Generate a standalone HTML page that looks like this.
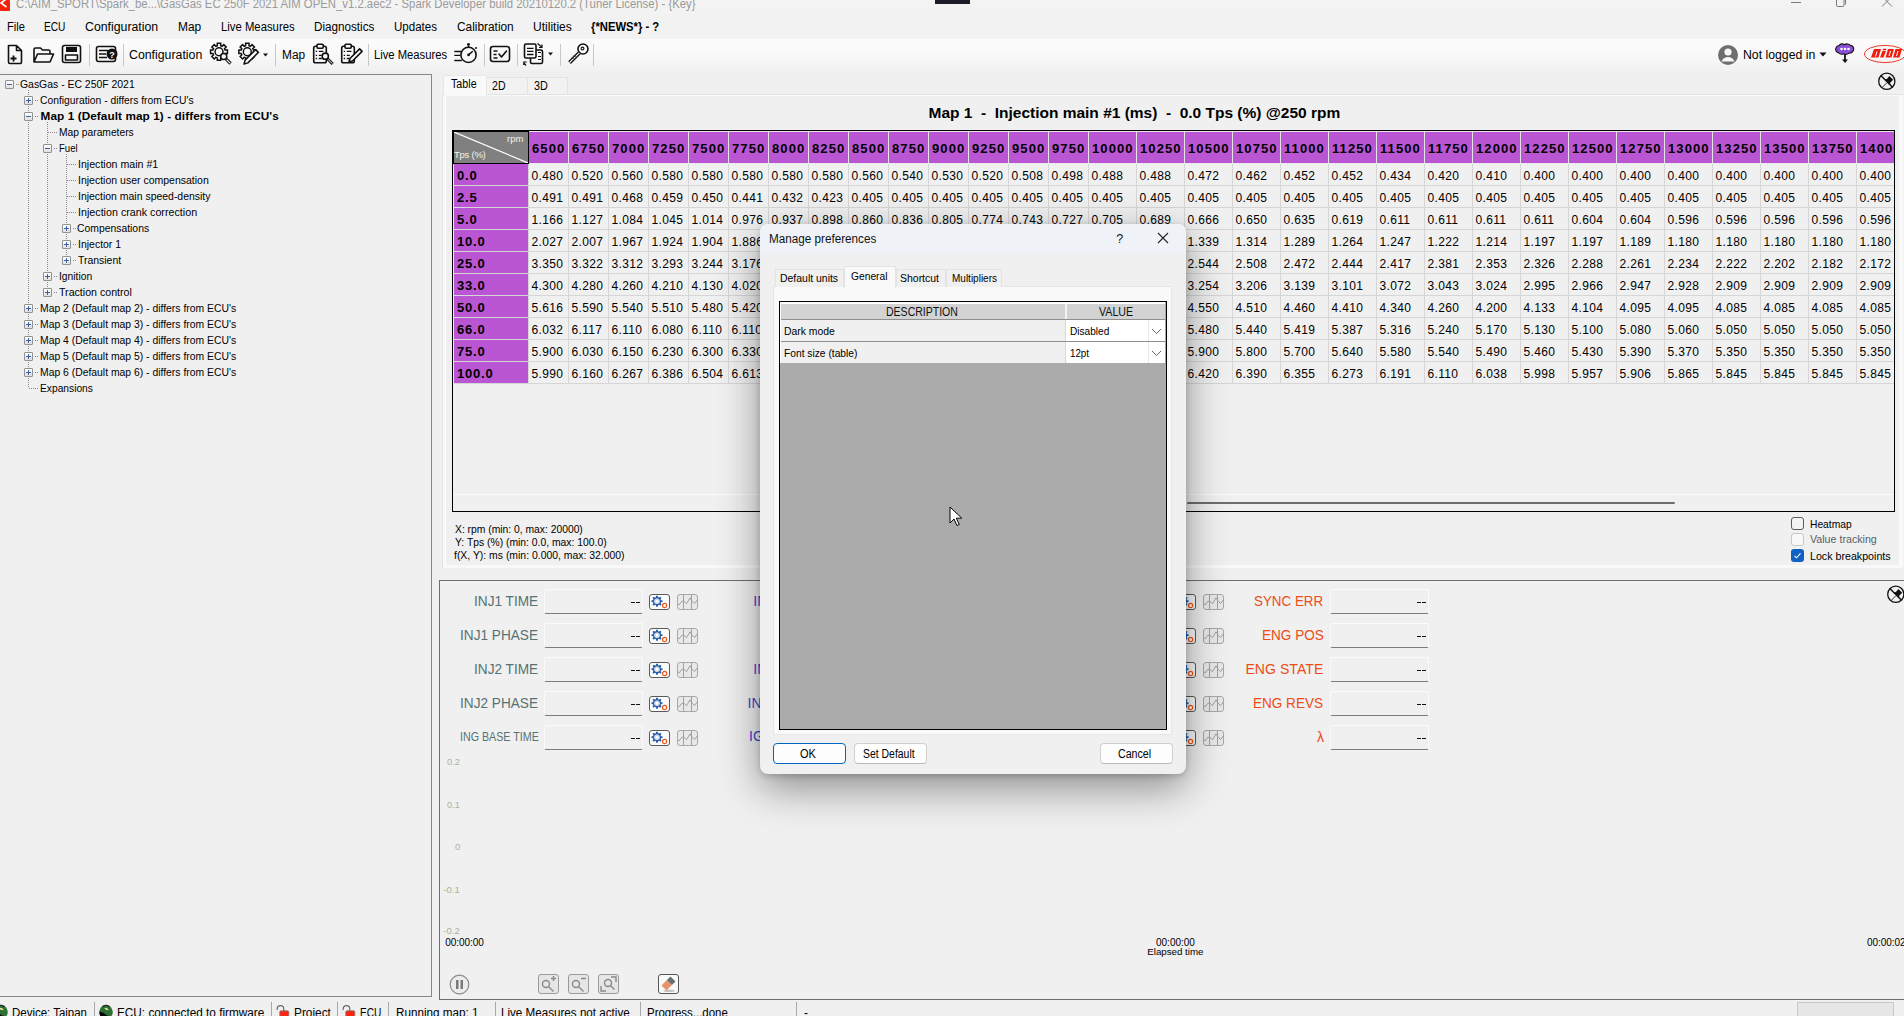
<!DOCTYPE html>
<html><head><meta charset="utf-8">
<style>
*{box-sizing:border-box;margin:0;padding:0}
html,body{width:1904px;height:1016px;overflow:hidden}
body{position:relative;background:#f0f0f0;font-family:"Liberation Sans",sans-serif;color:#000;font-size:12px}
.a{position:absolute;white-space:pre}
#title{left:0;top:0;width:1904px;height:14px;background:#f3f3f3;overflow:hidden}
#menubar{left:0;top:14px;width:1904px;height:25px;background:#f2f2f2}
#menubar span{position:absolute;top:6px;font-size:12px;line-height:14px}
#toolbar{left:0;top:39px;width:1904px;height:35px;background:linear-gradient(#fbfbfb,#fafafa 25%,#f7f7f7 55%,#efefef)}
.sep{position:absolute;top:5px;width:1px;height:22px;background:#c8c8c8}
.tbt{position:absolute;top:10px;font-size:12px;line-height:14px}
#tree{left:0;top:74px;width:432px;height:923px;border-top:1px solid #828790;border-right:1px solid #828790;border-bottom:1px solid #828790;background:#f0f0f0}
.tn{position:absolute;font-size:11px;line-height:13px;white-space:nowrap}
.exp{position:absolute;width:9px;height:9px;border:1px solid #919191;background:linear-gradient(#fff,#e0e0e0);border-radius:1px}
.exp:before{content:"";position:absolute;left:1px;top:3px;width:5px;height:1px;background:#3b5fa8}
.exp.p:after{content:"";position:absolute;left:3px;top:1px;width:1px;height:5px;background:#3b5fa8}
.vd{position:absolute;width:1px;background-image:linear-gradient(#8a8a8a 50%,transparent 50%);background-size:1px 2px}
.hd{position:absolute;height:1px;background-image:linear-gradient(90deg,#8a8a8a 50%,transparent 50%);background-size:2px 1px}
#tbl{left:452px;top:130px;width:1443px;height:382px;border:1px solid #000;border-width:1px 1px 1px 1px;overflow:hidden;background:#f0f0f0}
.hc,.dc,.rh{position:absolute;white-space:nowrap;overflow:hidden}
.hc{top:1px;height:31px;background:#ba55d3;font-weight:bold;font-size:13px;letter-spacing:1.1px;line-height:15px;padding-top:9px;padding-left:3px}
.dc{height:21px;background:#f0f0f0;font-size:12px;line-height:14px;padding-top:5px;padding-left:2.5px;letter-spacing:0.35px}
.rh{left:1px;width:74px;height:21px;background:#ba55d3;font-weight:bold;font-size:13px;letter-spacing:0.8px;line-height:15px;padding-top:4px;padding-left:3px}
</style></head><body>
<div class="a" id="title">
 <svg class="a" style="left:0;top:0" width="11" height="12"><rect x="0" y="0" width="10" height="11" rx="0.8" fill="#f42208"/><path d="M5.5 -0.5L1 3L6.5 7" fill="none" stroke="#fff" stroke-width="1.7"/></svg>
 <div class="a" style="left:935px;top:0;width:35px;height:4px;background:#1c1c28"></div>
 <svg class="a" style="left:1788px;top:-6px" width="110" height="20"><path d="M3 8.5h10" stroke="#7a7a7a" stroke-width="1"/><rect x="48.5" y="0.5" width="7.5" height="12" rx="1.2" fill="none" stroke="#7a7a7a" stroke-width="1"/><path d="M57.5 4v6.5" stroke="#7a7a7a" stroke-width="1"/><path d="M94 2.5l10 10 M104 2.5l-10 10" stroke="#7a7a7a" stroke-width="1"/></svg>
</div>
<div class="a" id="menubar"></div>
<div class="a" id="toolbar"></div>
<svg class="a" style="left:6px;top:43px;" width="20" height="22" viewBox="0 0 20 22"><path d="M2.5 2.5h8l5 5v11.5a1.5 1.5 0 0 1-1.5 1.5h-10a1.5 1.5 0 0 1-1.5-1.5z M10.5 2.5v5h5" fill="none" stroke="#111" stroke-width="1.6" stroke-linejoin="round" stroke-linecap="round"/><path d="M4.5 15.5h6 M7.5 12.5v6" stroke="#111" stroke-width="1.8"/></svg>
<svg class="a" style="left:32px;top:45px;" width="24" height="20" viewBox="0 0 24 20"><path d="M2 17V4.5a1.5 1.5 0 0 1 1.5-1.5h5l2 2h6a1.5 1.5 0 0 1 1.5 1.5V9 M2 17l3.5-8h16l-3.5 8z" fill="none" stroke="#111" stroke-width="1.6" stroke-linejoin="round" stroke-linecap="round"/></svg>
<svg class="a" style="left:61px;top:44px;" width="22" height="21" viewBox="0 0 22 21"><rect x="1.5" y="1.5" width="18" height="17" rx="2" fill="none" stroke="#111" stroke-width="1.6" stroke-linejoin="round" stroke-linecap="round"/><rect x="5" y="3" width="11" height="5" fill="#111"/><rect x="4.5" y="11" width="12" height="5" fill="none" stroke="#111" stroke-width="1.6" stroke-linejoin="round" stroke-linecap="round"/></svg>
<div class="sep" style="left:89px;top:44px;height:22px;position:absolute"></div>
<svg class="a" style="left:95px;top:45px;" width="24" height="19" viewBox="0 0 24 19"><rect x="1.5" y="1.5" width="19" height="15" rx="2" fill="none" stroke="#111" stroke-width="1.6" stroke-linejoin="round" stroke-linecap="round"/><path d="M4 5.5h9 M4 9h7 M4 12.5h8" stroke="#111" stroke-width="1.4"/><circle cx="17" cy="9" r="5.5" fill="#111"/><text x="17" y="12.5" font-size="9" font-weight="bold" fill="#fff" text-anchor="middle" font-family="Liberation Sans">?</text></svg>
<div class="sep" style="left:123px;top:44px;height:22px;position:absolute"></div>
<div class="a" style="left:129.30px;top:48.00px;font-size:12.5px;line-height:14px;transform:scaleX(0.9859);transform-origin:0.00px 0;">Configuration</div>
<svg class="a" style="left:208px;top:42px;" width="26" height="24" viewBox="0 0 26 24"><path d="M9.30 3.73L9.30 1.37L12.70 1.37L12.70 3.73A6.3 6.3 0 0 1 14.09 4.31L14.09 4.31L15.76 2.64L18.16 5.04L16.49 6.71A6.3 6.3 0 0 1 17.07 8.10L17.07 8.10L19.43 8.10L19.43 11.50L17.07 11.50A6.3 6.3 0 0 1 16.49 12.89L16.49 12.89L18.16 14.56L15.76 16.96L14.09 15.29A6.3 6.3 0 0 1 12.70 15.87L12.70 15.87L12.70 18.23L9.30 18.23L9.30 15.87A6.3 6.3 0 0 1 7.91 15.29L7.91 15.29L6.24 16.96L3.84 14.56L5.51 12.89A6.3 6.3 0 0 1 4.93 11.50L4.93 11.50L2.57 11.50L2.57 8.10L4.93 8.10A6.3 6.3 0 0 1 5.51 6.71L5.51 6.71L3.84 5.04L6.24 2.64L7.91 4.31A6.3 6.3 0 0 1 9.30 3.73Z" fill="#fafafa" stroke="#111" stroke-width="1.5" stroke-linejoin="miter"/><circle cx="11" cy="9.8" r="3.95" fill="none" stroke="#111" stroke-width="1.5"/><path d="M18.2 17.2l4.3 4.3" stroke="#111" stroke-width="3.2" stroke-linecap="butt"/><path d="M18.6 17.6l3.5 3.5" stroke="#fafafa" stroke-width="1.1"/><circle cx="15.75" cy="14.5" r="3" fill="#fafafa" stroke="#111" stroke-width="1.5"/></svg>
<svg class="a" style="left:237px;top:42px;" width="34" height="24" viewBox="0 0 34 24"><path d="M8.60 3.73L8.60 1.37L12.00 1.37L12.00 3.73A6.3 6.3 0 0 1 13.39 4.31L13.39 4.31L15.06 2.64L17.46 5.04L15.79 6.71A6.3 6.3 0 0 1 16.37 8.10L16.37 8.10L18.73 8.10L18.73 11.50L16.37 11.50A6.3 6.3 0 0 1 15.79 12.89L15.79 12.89L17.46 14.56L15.06 16.96L13.39 15.29A6.3 6.3 0 0 1 12.00 15.87L12.00 15.87L12.00 18.23L8.60 18.23L8.60 15.87A6.3 6.3 0 0 1 7.21 15.29L7.21 15.29L5.54 16.96L3.14 14.56L4.81 12.89A6.3 6.3 0 0 1 4.23 11.50L4.23 11.50L1.87 11.50L1.87 8.10L4.23 8.10A6.3 6.3 0 0 1 4.81 6.71L4.81 6.71L3.14 5.04L5.54 2.64L7.21 4.31A6.3 6.3 0 0 1 8.60 3.73Z" fill="#fafafa" stroke="#111" stroke-width="1.5" stroke-linejoin="miter"/><circle cx="10.3" cy="9.8" r="3.95" fill="none" stroke="#111" stroke-width="1.5"/><path d="M7 22L8.1 18.1L18.6 7.6L21.4 10.4L10.9 20.9Z" fill="#fafafa" stroke="#111" stroke-width="1.5" stroke-linejoin="round"/><path d="M26 11.5h5l-2.5 3z" fill="#111"/></svg>
<div class="sep" style="left:275px;top:44px;height:22px;position:absolute"></div>
<div class="a" style="left:281.50px;top:48.00px;font-size:12.5px;line-height:14px;transform:scaleX(0.9501);transform-origin:0.00px 0;">Map</div>
<svg class="a" style="left:312px;top:43px;" width="24" height="23" viewBox="0 0 24 23"><rect x="1.7" y="3.3" width="12.6" height="16.4" rx="1.8" fill="none" stroke="#111" stroke-width="1.6" stroke-linejoin="round" stroke-linecap="round"/><rect x="5" y="1.3" width="6.2" height="4" rx="1" fill="#fafafa" fill="none" stroke="#111" stroke-width="1.6" stroke-linejoin="round" stroke-linecap="round"/><path d="M3.7 8.4h1.4 M6.8 8.4h4.6 M3.7 12.4h1.4 M6.8 12.4h3 M3.7 15.5h1.4 M6.8 15.5h3" stroke="#111" stroke-width="1.3"/><path d="M15.5 15.8l5.2 5.2" stroke="#111" stroke-width="3"/><path d="M15.9 16.2l4.4 4.4" stroke="#fafafa" stroke-width="1"/><circle cx="13.3" cy="13.2" r="3.1" fill="#fafafa" fill="none" stroke="#111" stroke-width="1.6" stroke-linejoin="round" stroke-linecap="round"/></svg>
<svg class="a" style="left:340px;top:43px;" width="24" height="23" viewBox="0 0 24 23"><rect x="1.7" y="3.3" width="12.6" height="16.4" rx="1.8" fill="none" stroke="#111" stroke-width="1.6" stroke-linejoin="round" stroke-linecap="round"/><rect x="5" y="1.3" width="6.2" height="4" rx="1" fill="#fafafa" fill="none" stroke="#111" stroke-width="1.6" stroke-linejoin="round" stroke-linecap="round"/><path d="M3.7 8.4h1.4 M6.8 8.4h4.6 M3.7 12.4h1.4 M6.8 12.4h3 M3.7 15.5h1.4 M6.8 15.5h3" stroke="#111" stroke-width="1.3"/><path d="M9 18.5L10 15.5L19.6 5.9L22.1 8.4L12.5 18z" fill="#fafafa" fill="none" stroke="#111" stroke-width="1.6" stroke-linejoin="round" stroke-linecap="round"/></svg>
<div class="sep" style="left:368px;top:44px;height:22px;position:absolute"></div>
<div class="a" style="left:374.30px;top:48.00px;font-size:12.5px;line-height:14px;transform:scaleX(0.8993);transform-origin:0.00px 0;">Live Measures</div>
<svg class="a" style="left:453px;top:42px;" width="26" height="25" viewBox="0 0 26 25"><circle cx="15.5" cy="12.9" r="7.6" fill="none" stroke="#111" stroke-width="1.6" stroke-linejoin="round" stroke-linecap="round"/><path d="M15.5 3v2.2" stroke="#111" stroke-width="1.6"/><rect x="14" y="1.2" width="3" height="2" rx="0.8" fill="#111"/><path d="M1.3 9.5h7 M1.3 13.3h6 M1.3 18.5h7.5" stroke="#111" stroke-width="1.3"/><path d="M15.5 12.9L19.8 9.2" stroke="#111" stroke-width="1.5"/><circle cx="15.5" cy="12.9" r="1.3" fill="#111"/><circle cx="23" cy="6" r="1" fill="#111"/></svg>
<div class="sep" style="left:484px;top:44px;height:22px;position:absolute"></div>
<svg class="a" style="left:489px;top:45px;" width="23" height="19" viewBox="0 0 23 19"><rect x="1.5" y="1.5" width="19" height="15" rx="2.5" fill="none" stroke="#111" stroke-width="1.6" stroke-linejoin="round" stroke-linecap="round"/><path d="M4.5 6h4 M4.5 9.5h3 M4.5 13h4" stroke="#111" stroke-width="1.4"/><path d="M10 9l2.5 3 5-6" fill="none" stroke="#111" stroke-width="1.6" stroke-linejoin="round" stroke-linecap="round" stroke-width="1.8"/></svg>
<div class="sep" style="left:517px;top:44px;height:22px;position:absolute"></div>
<svg class="a" style="left:523px;top:42px;" width="32" height="26" viewBox="0 0 32 26"><rect x="7.5" y="8" width="12" height="13.5" rx="1.5" fill="#fafafa" fill="none" stroke="#111" stroke-width="1.6" stroke-linejoin="round" stroke-linecap="round"/><path d="M15 10.5h3 M15 14.5h3 M15 17.5h3" stroke="#111" stroke-width="1.2"/><rect x="1.5" y="2" width="11.5" height="14" rx="1.5" fill="#fafafa" fill="none" stroke="#111" stroke-width="1.6" stroke-linejoin="round" stroke-linecap="round"/><path d="M4 6.3h6.5 M4 9.3h6.5 M4 12.5h6.5" stroke="#111" stroke-width="1.3"/><path d="M14.5 1.5l4.5 3.8 M19 2.5v3h-3 M3 23.5l-2.5-3 M0.8 23v-3h3" fill="none" stroke="#111" stroke-width="1.2"/><path d="M25 10.5h5l-2.5 3z" fill="#111"/></svg>
<div class="sep" style="left:560px;top:44px;height:22px;position:absolute"></div>
<svg class="a" style="left:565px;top:42px;" width="26" height="24" viewBox="0 0 26 24"><circle cx="18" cy="7" r="5" fill="#fafafa" fill="none" stroke="#111" stroke-width="1.6" stroke-linejoin="round" stroke-linecap="round"/><circle cx="17.5" cy="6.5" r="1.4" fill="none" stroke="#111" stroke-width="1.1"/><path d="M14.3 10.8L4.5 20.6" stroke="#111" stroke-width="3.8"/><path d="M14.3 10.8L4.5 20.6" stroke="#fafafa" stroke-width="1.2"/><path d="M7 15.5l1.5 1.5 M9 13.5l1.5 1.5" stroke="#111" stroke-width="1"/></svg>
<div class="sep" style="left:593px;top:44px;height:22px;position:absolute"></div>
<svg class="a" style="left:1717px;top:44px;" width="22" height="22" viewBox="0 0 22 22"><circle cx="11" cy="11" r="10" fill="#6e6e6e"/><circle cx="11" cy="8" r="3.6" fill="#f8f8f8"/><path d="M4.5 17.5c1.5-3.5 4-4.5 6.5-4.5s5 1 6.5 4.5" fill="#f8f8f8"/></svg>
<div class="a" style="left:1743.20px;top:48.00px;font-size:12.5px;line-height:14px;transform:scaleX(0.9815);transform-origin:0.00px 0;">Not logged in</div>
<svg class="a" style="left:1819px;top:52px;" width="8" height="5" viewBox="0 0 8 5"><path d="M0.5 0.5h7l-3.5 4z" fill="#111"/></svg>
<svg class="a" style="left:1834px;top:42px;" width="22" height="23" viewBox="0 0 22 23"><path d="M5 3.5c1.5-2 4-2 5.5-.8 1.5-1.2 4.5-1 5.8.5 2.5.3 4 2.5 3.2 4.8-.8 2.3-2.5 3.2-4.5 3.2-1.5 1.3-4 1.5-5.5.5-1.5.8-4 .5-5-1-2.5-.5-3.5-3-2.5-5C2.5 4.5 3.5 3.5 5 3.5z" fill="#8a4fd8" stroke="#111" stroke-width="1.1"/><circle cx="7.5" cy="7" r="1.3" fill="#fff"/><circle cx="11" cy="7" r="1.3" fill="#fff"/><circle cx="14.5" cy="7" r="1.3" fill="#fff"/><path d="M11 13v6.5" stroke="#111" stroke-width="1.8"/><path d="M8 17.5l3 3.5 3-3.5z" fill="#111"/></svg>
<svg class="a" style="left:1862px;top:44px;" width="42" height="20" viewBox="0 0 42 20"><ellipse cx="23" cy="10" rx="20.5" ry="8.6" fill="none" stroke="#ee3a28" stroke-width="1"/><path d="M12 5h7l-2.5 8.5h-7.5z M20.5 7h3.5l-2.5 6.5h-3.5z M21 4.8h3.5l-.4 1.4h-3.5z M26 5h6l-2.5 8.5h-6z M33.5 5h6.5l-2.5 8.5h-6.5z" fill="#f01e10"/><path d="M15 7.5l-1.5 5 M28.5 7l-1.5 5 M36 7l-1.5 5" stroke="#fff" stroke-width="1"/></svg>
<div class="a" style="left:7.10px;top:20.00px;font-size:12.5px;line-height:14px;transform:scaleX(0.8889);transform-origin:0.00px 0;">File</div>
<div class="a" style="left:44.30px;top:20.00px;font-size:12.5px;line-height:14px;transform:scaleX(0.8110);transform-origin:0.00px 0;">ECU</div>
<div class="a" style="left:85.40px;top:20.00px;font-size:12.5px;line-height:14px;transform:scaleX(0.9845);transform-origin:0.00px 0;">Configuration</div>
<div class="a" style="left:178.20px;top:20.00px;font-size:12.5px;line-height:14px;transform:scaleX(0.9542);transform-origin:0.00px 0;">Map</div>
<div class="a" style="left:221.00px;top:20.00px;font-size:12.5px;line-height:14px;transform:scaleX(0.9054);transform-origin:0.00px 0;">Live Measures</div>
<div class="a" style="left:314.30px;top:20.00px;font-size:12.5px;line-height:14px;transform:scaleX(0.9333);transform-origin:0.00px 0;">Diagnostics</div>
<div class="a" style="left:394.00px;top:20.00px;font-size:12.5px;line-height:14px;transform:scaleX(0.9235);transform-origin:0.00px 0;">Updates</div>
<div class="a" style="left:456.50px;top:20.00px;font-size:12.5px;line-height:14px;transform:scaleX(0.9490);transform-origin:0.00px 0;">Calibration</div>
<div class="a" style="left:533.20px;top:20.00px;font-size:12.5px;line-height:14px;transform:scaleX(0.9631);transform-origin:0.00px 0;">Utilities</div>
<div class="a" style="left:591.00px;top:20.00px;font-size:12.0px;line-height:14px;font-weight:bold;transform:scaleX(0.9385);transform-origin:0.00px 0;">{*NEWS*} - ?</div>
<div class="a" style="left:16.30px;top:-3.00px;font-size:12.5px;line-height:14px;color:#9a9a9a;transform:scaleX(0.9072);transform-origin:0.00px 0;">C:\AIM_SPORT\Spark_be...\GasGas EC 250F 2021 AIM OPEN_v1.2.aec2 - Spark Developer build 20210120.2 (Tuner License) - {Key}</div>
<div class="a" id="tree"></div>
<div class="vd" style="left:28px;top:90px;height:298px"></div>
<div class="vd" style="left:47px;top:122px;height:170px"></div>
<div class="vd" style="left:66px;top:154px;height:106px"></div>
<div class="exp " style="left:5px;top:80px"></div>
<div class="hd" style="left:16px;top:84px;width:4px"></div>
<div class="a" style="left:20.10px;top:78.00px;font-size:11.0px;line-height:13px;transform:scaleX(0.9475);transform-origin:0.00px 0;">GasGas - EC 250F 2021</div>
<div class="exp p" style="left:24px;top:96px"></div>
<div class="hd" style="left:35px;top:100px;width:4px"></div>
<div class="a" style="left:39.60px;top:94.00px;font-size:11.0px;line-height:13px;transform:scaleX(0.9372);transform-origin:0.00px 0;">Configuration - differs from ECU&#x27;s</div>
<div class="exp " style="left:24px;top:112px"></div>
<div class="hd" style="left:35px;top:116px;width:4px"></div>
<div class="a" style="left:40.60px;top:109.00px;font-size:11.75px;line-height:14px;letter-spacing:0.086px;font-weight:bold;">Map 1 (Default map 1) - differs from ECU&#x27;s</div>
<div class="hd" style="left:48px;top:132px;width:10px"></div>
<div class="a" style="left:59.40px;top:126.00px;font-size:11.0px;line-height:13px;transform:scaleX(0.9327);transform-origin:0.00px 0;">Map parameters</div>
<div class="exp " style="left:43px;top:144px"></div>
<div class="hd" style="left:54px;top:148px;width:4px"></div>
<div class="a" style="left:59.40px;top:142.00px;font-size:11.0px;line-height:13px;transform:scaleX(0.8694);transform-origin:0.00px 0;">Fuel</div>
<div class="hd" style="left:67px;top:164px;width:10px"></div>
<div class="a" style="left:78.00px;top:158.00px;font-size:11.0px;line-height:13px;transform:scaleX(0.9644);transform-origin:0.00px 0;">Injection main #1</div>
<div class="hd" style="left:67px;top:180px;width:10px"></div>
<div class="a" style="left:78.00px;top:174.00px;font-size:11.0px;line-height:13px;transform:scaleX(0.9549);transform-origin:0.00px 0;">Injection user compensation</div>
<div class="hd" style="left:67px;top:196px;width:10px"></div>
<div class="a" style="left:78.00px;top:190.00px;font-size:11.0px;line-height:13px;transform:scaleX(0.9504);transform-origin:0.00px 0;">Injection main speed-density</div>
<div class="hd" style="left:67px;top:212px;width:10px"></div>
<div class="a" style="left:78.00px;top:206.00px;font-size:11.0px;line-height:13px;transform:scaleX(0.9740);transform-origin:0.00px 0;">Injection crank correction</div>
<div class="exp p" style="left:62px;top:224px"></div>
<div class="hd" style="left:73px;top:228px;width:4px"></div>
<div class="a" style="left:77.30px;top:222.00px;font-size:11.0px;line-height:13px;transform:scaleX(0.9434);transform-origin:0.00px 0;">Compensations</div>
<div class="exp p" style="left:62px;top:240px"></div>
<div class="hd" style="left:73px;top:244px;width:4px"></div>
<div class="a" style="left:78.00px;top:238.00px;font-size:11.0px;line-height:13px;transform:scaleX(0.9526);transform-origin:0.00px 0;">Injector 1</div>
<div class="exp p" style="left:62px;top:256px"></div>
<div class="hd" style="left:73px;top:260px;width:4px"></div>
<div class="a" style="left:78.00px;top:254.00px;font-size:11.0px;line-height:13px;transform:scaleX(0.9485);transform-origin:0.00px 0;">Transient</div>
<div class="exp p" style="left:43px;top:272px"></div>
<div class="hd" style="left:54px;top:276px;width:4px"></div>
<div class="a" style="left:59.40px;top:270.00px;font-size:11.0px;line-height:13px;transform:scaleX(0.9359);transform-origin:0.00px 0;">Ignition</div>
<div class="exp p" style="left:43px;top:288px"></div>
<div class="hd" style="left:54px;top:292px;width:4px"></div>
<div class="a" style="left:59.40px;top:286.00px;font-size:11.0px;line-height:13px;transform:scaleX(0.9655);transform-origin:0.00px 0;">Traction control</div>
<div class="exp p" style="left:24px;top:304px"></div>
<div class="hd" style="left:35px;top:308px;width:4px"></div>
<div class="a" style="left:40.30px;top:302.00px;font-size:11.0px;line-height:13px;transform:scaleX(0.9432);transform-origin:0.00px 0;">Map 2 (Default map 2) - differs from ECU&#x27;s</div>
<div class="exp p" style="left:24px;top:320px"></div>
<div class="hd" style="left:35px;top:324px;width:4px"></div>
<div class="a" style="left:40.30px;top:318.00px;font-size:11.0px;line-height:13px;transform:scaleX(0.9432);transform-origin:0.00px 0;">Map 3 (Default map 3) - differs from ECU&#x27;s</div>
<div class="exp p" style="left:24px;top:336px"></div>
<div class="hd" style="left:35px;top:340px;width:4px"></div>
<div class="a" style="left:40.30px;top:334.00px;font-size:11.0px;line-height:13px;transform:scaleX(0.9432);transform-origin:0.00px 0;">Map 4 (Default map 4) - differs from ECU&#x27;s</div>
<div class="exp p" style="left:24px;top:352px"></div>
<div class="hd" style="left:35px;top:356px;width:4px"></div>
<div class="a" style="left:40.30px;top:350.00px;font-size:11.0px;line-height:13px;transform:scaleX(0.9432);transform-origin:0.00px 0;">Map 5 (Default map 5) - differs from ECU&#x27;s</div>
<div class="exp p" style="left:24px;top:368px"></div>
<div class="hd" style="left:35px;top:372px;width:4px"></div>
<div class="a" style="left:40.30px;top:366.00px;font-size:11.0px;line-height:13px;transform:scaleX(0.9432);transform-origin:0.00px 0;">Map 6 (Default map 6) - differs from ECU&#x27;s</div>
<div class="hd" style="left:29px;top:388px;width:10px"></div>
<div class="a" style="left:40.30px;top:382.00px;font-size:11.0px;line-height:13px;transform:scaleX(0.9302);transform-origin:0.00px 0;">Expansions</div>
<!-- tabs -->
<div class="a" style="left:442px;top:94px;width:1461px;height:474px;background:#f9f9f9;border-left:1px solid #e3e3e3;border-top:1px solid #e3e3e3"></div>
<div class="a" style="left:446px;top:96px;width:1453px;height:469px;background:#f0f0f0"></div>
<div class="a" style="left:487px;top:77px;width:41px;height:18px;background:#f2f2f2;border:1px solid #e3e3e3;border-left:none"></div>
<div class="a" style="left:527px;top:77px;width:41px;height:18px;background:#f2f2f2;border:1px solid #e3e3e3"></div>
<div class="a" style="left:443px;top:75px;width:44px;height:21px;background:#f9f9f9;border:1px solid #e8e8e8;border-bottom:none"></div>
<div class="a" id="tbl">
 <div class="a" style="left:0;top:0;width:1441px;height:253px;background:#d6d6d6"></div>
 <div class="a" style="left:0;top:0;width:1px;height:253px;background:#ececec"></div>
 <div class="a" style="left:0;top:0;width:1441px;height:33px;background:#e4e4e4"></div>
 <div class="a" style="left:0;top:32px;width:1441px;height:1px;background:#e6ebe6"></div>
 <div class="hc" style="left:76px;width:39px">6500</div>
<div class="hc" style="left:116px;width:39px">6750</div>
<div class="hc" style="left:156px;width:39px">7000</div>
<div class="hc" style="left:196px;width:39px">7250</div>
<div class="hc" style="left:236px;width:39px">7500</div>
<div class="hc" style="left:276px;width:39px">7750</div>
<div class="hc" style="left:316px;width:39px">8000</div>
<div class="hc" style="left:356px;width:39px">8250</div>
<div class="hc" style="left:396px;width:39px">8500</div>
<div class="hc" style="left:436px;width:39px">8750</div>
<div class="hc" style="left:476px;width:39px">9000</div>
<div class="hc" style="left:516px;width:39px">9250</div>
<div class="hc" style="left:556px;width:39px">9500</div>
<div class="hc" style="left:596px;width:39px">9750</div>
<div class="hc" style="left:636px;width:47px">10000</div>
<div class="hc" style="left:684px;width:47px">10250</div>
<div class="hc" style="left:732px;width:47px">10500</div>
<div class="hc" style="left:780px;width:47px">10750</div>
<div class="hc" style="left:828px;width:47px">11000</div>
<div class="hc" style="left:876px;width:47px">11250</div>
<div class="hc" style="left:924px;width:47px">11500</div>
<div class="hc" style="left:972px;width:47px">11750</div>
<div class="hc" style="left:1020px;width:47px">12000</div>
<div class="hc" style="left:1068px;width:47px">12250</div>
<div class="hc" style="left:1116px;width:47px">12500</div>
<div class="hc" style="left:1164px;width:47px">12750</div>
<div class="hc" style="left:1212px;width:47px">13000</div>
<div class="hc" style="left:1260px;width:47px">13250</div>
<div class="hc" style="left:1308px;width:47px">13500</div>
<div class="hc" style="left:1356px;width:47px">13750</div>
<div class="hc" style="left:1404px;width:47px">14000</div>
<div class="rh" style="top:33px">0.0</div>
<div class="dc" style="left:76px;top:33px;width:39px">0.480</div>
<div class="dc" style="left:116px;top:33px;width:39px">0.520</div>
<div class="dc" style="left:156px;top:33px;width:39px">0.560</div>
<div class="dc" style="left:196px;top:33px;width:39px">0.580</div>
<div class="dc" style="left:236px;top:33px;width:39px">0.580</div>
<div class="dc" style="left:276px;top:33px;width:39px">0.580</div>
<div class="dc" style="left:316px;top:33px;width:39px">0.580</div>
<div class="dc" style="left:356px;top:33px;width:39px">0.580</div>
<div class="dc" style="left:396px;top:33px;width:39px">0.560</div>
<div class="dc" style="left:436px;top:33px;width:39px">0.540</div>
<div class="dc" style="left:476px;top:33px;width:39px">0.530</div>
<div class="dc" style="left:516px;top:33px;width:39px">0.520</div>
<div class="dc" style="left:556px;top:33px;width:39px">0.508</div>
<div class="dc" style="left:596px;top:33px;width:39px">0.498</div>
<div class="dc" style="left:636px;top:33px;width:47px">0.488</div>
<div class="dc" style="left:684px;top:33px;width:47px">0.488</div>
<div class="dc" style="left:732px;top:33px;width:47px">0.472</div>
<div class="dc" style="left:780px;top:33px;width:47px">0.462</div>
<div class="dc" style="left:828px;top:33px;width:47px">0.452</div>
<div class="dc" style="left:876px;top:33px;width:47px">0.452</div>
<div class="dc" style="left:924px;top:33px;width:47px">0.434</div>
<div class="dc" style="left:972px;top:33px;width:47px">0.420</div>
<div class="dc" style="left:1020px;top:33px;width:47px">0.410</div>
<div class="dc" style="left:1068px;top:33px;width:47px">0.400</div>
<div class="dc" style="left:1116px;top:33px;width:47px">0.400</div>
<div class="dc" style="left:1164px;top:33px;width:47px">0.400</div>
<div class="dc" style="left:1212px;top:33px;width:47px">0.400</div>
<div class="dc" style="left:1260px;top:33px;width:47px">0.400</div>
<div class="dc" style="left:1308px;top:33px;width:47px">0.400</div>
<div class="dc" style="left:1356px;top:33px;width:47px">0.400</div>
<div class="dc" style="left:1404px;top:33px;width:47px">0.400</div>
<div class="rh" style="top:55px">2.5</div>
<div class="dc" style="left:76px;top:55px;width:39px">0.491</div>
<div class="dc" style="left:116px;top:55px;width:39px">0.491</div>
<div class="dc" style="left:156px;top:55px;width:39px">0.468</div>
<div class="dc" style="left:196px;top:55px;width:39px">0.459</div>
<div class="dc" style="left:236px;top:55px;width:39px">0.450</div>
<div class="dc" style="left:276px;top:55px;width:39px">0.441</div>
<div class="dc" style="left:316px;top:55px;width:39px">0.432</div>
<div class="dc" style="left:356px;top:55px;width:39px">0.423</div>
<div class="dc" style="left:396px;top:55px;width:39px">0.405</div>
<div class="dc" style="left:436px;top:55px;width:39px">0.405</div>
<div class="dc" style="left:476px;top:55px;width:39px">0.405</div>
<div class="dc" style="left:516px;top:55px;width:39px">0.405</div>
<div class="dc" style="left:556px;top:55px;width:39px">0.405</div>
<div class="dc" style="left:596px;top:55px;width:39px">0.405</div>
<div class="dc" style="left:636px;top:55px;width:47px">0.405</div>
<div class="dc" style="left:684px;top:55px;width:47px">0.405</div>
<div class="dc" style="left:732px;top:55px;width:47px">0.405</div>
<div class="dc" style="left:780px;top:55px;width:47px">0.405</div>
<div class="dc" style="left:828px;top:55px;width:47px">0.405</div>
<div class="dc" style="left:876px;top:55px;width:47px">0.405</div>
<div class="dc" style="left:924px;top:55px;width:47px">0.405</div>
<div class="dc" style="left:972px;top:55px;width:47px">0.405</div>
<div class="dc" style="left:1020px;top:55px;width:47px">0.405</div>
<div class="dc" style="left:1068px;top:55px;width:47px">0.405</div>
<div class="dc" style="left:1116px;top:55px;width:47px">0.405</div>
<div class="dc" style="left:1164px;top:55px;width:47px">0.405</div>
<div class="dc" style="left:1212px;top:55px;width:47px">0.405</div>
<div class="dc" style="left:1260px;top:55px;width:47px">0.405</div>
<div class="dc" style="left:1308px;top:55px;width:47px">0.405</div>
<div class="dc" style="left:1356px;top:55px;width:47px">0.405</div>
<div class="dc" style="left:1404px;top:55px;width:47px">0.405</div>
<div class="rh" style="top:77px">5.0</div>
<div class="dc" style="left:76px;top:77px;width:39px">1.166</div>
<div class="dc" style="left:116px;top:77px;width:39px">1.127</div>
<div class="dc" style="left:156px;top:77px;width:39px">1.084</div>
<div class="dc" style="left:196px;top:77px;width:39px">1.045</div>
<div class="dc" style="left:236px;top:77px;width:39px">1.014</div>
<div class="dc" style="left:276px;top:77px;width:39px">0.976</div>
<div class="dc" style="left:316px;top:77px;width:39px">0.937</div>
<div class="dc" style="left:356px;top:77px;width:39px">0.898</div>
<div class="dc" style="left:396px;top:77px;width:39px">0.860</div>
<div class="dc" style="left:436px;top:77px;width:39px">0.836</div>
<div class="dc" style="left:476px;top:77px;width:39px">0.805</div>
<div class="dc" style="left:516px;top:77px;width:39px">0.774</div>
<div class="dc" style="left:556px;top:77px;width:39px">0.743</div>
<div class="dc" style="left:596px;top:77px;width:39px">0.727</div>
<div class="dc" style="left:636px;top:77px;width:47px">0.705</div>
<div class="dc" style="left:684px;top:77px;width:47px">0.689</div>
<div class="dc" style="left:732px;top:77px;width:47px">0.666</div>
<div class="dc" style="left:780px;top:77px;width:47px">0.650</div>
<div class="dc" style="left:828px;top:77px;width:47px">0.635</div>
<div class="dc" style="left:876px;top:77px;width:47px">0.619</div>
<div class="dc" style="left:924px;top:77px;width:47px">0.611</div>
<div class="dc" style="left:972px;top:77px;width:47px">0.611</div>
<div class="dc" style="left:1020px;top:77px;width:47px">0.611</div>
<div class="dc" style="left:1068px;top:77px;width:47px">0.611</div>
<div class="dc" style="left:1116px;top:77px;width:47px">0.604</div>
<div class="dc" style="left:1164px;top:77px;width:47px">0.604</div>
<div class="dc" style="left:1212px;top:77px;width:47px">0.596</div>
<div class="dc" style="left:1260px;top:77px;width:47px">0.596</div>
<div class="dc" style="left:1308px;top:77px;width:47px">0.596</div>
<div class="dc" style="left:1356px;top:77px;width:47px">0.596</div>
<div class="dc" style="left:1404px;top:77px;width:47px">0.596</div>
<div class="rh" style="top:99px">10.0</div>
<div class="dc" style="left:76px;top:99px;width:39px">2.027</div>
<div class="dc" style="left:116px;top:99px;width:39px">2.007</div>
<div class="dc" style="left:156px;top:99px;width:39px">1.967</div>
<div class="dc" style="left:196px;top:99px;width:39px">1.924</div>
<div class="dc" style="left:236px;top:99px;width:39px">1.904</div>
<div class="dc" style="left:276px;top:99px;width:39px">1.886</div>
<div class="dc" style="left:316px;top:99px;width:39px">1.850</div>
<div class="dc" style="left:356px;top:99px;width:39px">1.800</div>
<div class="dc" style="left:396px;top:99px;width:39px">1.750</div>
<div class="dc" style="left:436px;top:99px;width:39px">1.700</div>
<div class="dc" style="left:476px;top:99px;width:39px">1.650</div>
<div class="dc" style="left:516px;top:99px;width:39px">1.600</div>
<div class="dc" style="left:556px;top:99px;width:39px">1.550</div>
<div class="dc" style="left:596px;top:99px;width:39px">1.500</div>
<div class="dc" style="left:636px;top:99px;width:47px">1.450</div>
<div class="dc" style="left:684px;top:99px;width:47px">1.400</div>
<div class="dc" style="left:732px;top:99px;width:47px">1.339</div>
<div class="dc" style="left:780px;top:99px;width:47px">1.314</div>
<div class="dc" style="left:828px;top:99px;width:47px">1.289</div>
<div class="dc" style="left:876px;top:99px;width:47px">1.264</div>
<div class="dc" style="left:924px;top:99px;width:47px">1.247</div>
<div class="dc" style="left:972px;top:99px;width:47px">1.222</div>
<div class="dc" style="left:1020px;top:99px;width:47px">1.214</div>
<div class="dc" style="left:1068px;top:99px;width:47px">1.197</div>
<div class="dc" style="left:1116px;top:99px;width:47px">1.197</div>
<div class="dc" style="left:1164px;top:99px;width:47px">1.189</div>
<div class="dc" style="left:1212px;top:99px;width:47px">1.180</div>
<div class="dc" style="left:1260px;top:99px;width:47px">1.180</div>
<div class="dc" style="left:1308px;top:99px;width:47px">1.180</div>
<div class="dc" style="left:1356px;top:99px;width:47px">1.180</div>
<div class="dc" style="left:1404px;top:99px;width:47px">1.180</div>
<div class="rh" style="top:121px">25.0</div>
<div class="dc" style="left:76px;top:121px;width:39px">3.350</div>
<div class="dc" style="left:116px;top:121px;width:39px">3.322</div>
<div class="dc" style="left:156px;top:121px;width:39px">3.312</div>
<div class="dc" style="left:196px;top:121px;width:39px">3.293</div>
<div class="dc" style="left:236px;top:121px;width:39px">3.244</div>
<div class="dc" style="left:276px;top:121px;width:39px">3.176</div>
<div class="dc" style="left:316px;top:121px;width:39px">3.100</div>
<div class="dc" style="left:356px;top:121px;width:39px">3.000</div>
<div class="dc" style="left:396px;top:121px;width:39px">2.950</div>
<div class="dc" style="left:436px;top:121px;width:39px">2.900</div>
<div class="dc" style="left:476px;top:121px;width:39px">2.850</div>
<div class="dc" style="left:516px;top:121px;width:39px">2.800</div>
<div class="dc" style="left:556px;top:121px;width:39px">2.750</div>
<div class="dc" style="left:596px;top:121px;width:39px">2.700</div>
<div class="dc" style="left:636px;top:121px;width:47px">2.650</div>
<div class="dc" style="left:684px;top:121px;width:47px">2.600</div>
<div class="dc" style="left:732px;top:121px;width:47px">2.544</div>
<div class="dc" style="left:780px;top:121px;width:47px">2.508</div>
<div class="dc" style="left:828px;top:121px;width:47px">2.472</div>
<div class="dc" style="left:876px;top:121px;width:47px">2.444</div>
<div class="dc" style="left:924px;top:121px;width:47px">2.417</div>
<div class="dc" style="left:972px;top:121px;width:47px">2.381</div>
<div class="dc" style="left:1020px;top:121px;width:47px">2.353</div>
<div class="dc" style="left:1068px;top:121px;width:47px">2.326</div>
<div class="dc" style="left:1116px;top:121px;width:47px">2.288</div>
<div class="dc" style="left:1164px;top:121px;width:47px">2.261</div>
<div class="dc" style="left:1212px;top:121px;width:47px">2.234</div>
<div class="dc" style="left:1260px;top:121px;width:47px">2.222</div>
<div class="dc" style="left:1308px;top:121px;width:47px">2.202</div>
<div class="dc" style="left:1356px;top:121px;width:47px">2.182</div>
<div class="dc" style="left:1404px;top:121px;width:47px">2.172</div>
<div class="rh" style="top:143px">33.0</div>
<div class="dc" style="left:76px;top:143px;width:39px">4.300</div>
<div class="dc" style="left:116px;top:143px;width:39px">4.280</div>
<div class="dc" style="left:156px;top:143px;width:39px">4.260</div>
<div class="dc" style="left:196px;top:143px;width:39px">4.210</div>
<div class="dc" style="left:236px;top:143px;width:39px">4.130</div>
<div class="dc" style="left:276px;top:143px;width:39px">4.020</div>
<div class="dc" style="left:316px;top:143px;width:39px">3.950</div>
<div class="dc" style="left:356px;top:143px;width:39px">3.850</div>
<div class="dc" style="left:396px;top:143px;width:39px">3.750</div>
<div class="dc" style="left:436px;top:143px;width:39px">3.650</div>
<div class="dc" style="left:476px;top:143px;width:39px">3.550</div>
<div class="dc" style="left:516px;top:143px;width:39px">3.500</div>
<div class="dc" style="left:556px;top:143px;width:39px">3.450</div>
<div class="dc" style="left:596px;top:143px;width:39px">3.400</div>
<div class="dc" style="left:636px;top:143px;width:47px">3.350</div>
<div class="dc" style="left:684px;top:143px;width:47px">3.300</div>
<div class="dc" style="left:732px;top:143px;width:47px">3.254</div>
<div class="dc" style="left:780px;top:143px;width:47px">3.206</div>
<div class="dc" style="left:828px;top:143px;width:47px">3.139</div>
<div class="dc" style="left:876px;top:143px;width:47px">3.101</div>
<div class="dc" style="left:924px;top:143px;width:47px">3.072</div>
<div class="dc" style="left:972px;top:143px;width:47px">3.043</div>
<div class="dc" style="left:1020px;top:143px;width:47px">3.024</div>
<div class="dc" style="left:1068px;top:143px;width:47px">2.995</div>
<div class="dc" style="left:1116px;top:143px;width:47px">2.966</div>
<div class="dc" style="left:1164px;top:143px;width:47px">2.947</div>
<div class="dc" style="left:1212px;top:143px;width:47px">2.928</div>
<div class="dc" style="left:1260px;top:143px;width:47px">2.909</div>
<div class="dc" style="left:1308px;top:143px;width:47px">2.909</div>
<div class="dc" style="left:1356px;top:143px;width:47px">2.909</div>
<div class="dc" style="left:1404px;top:143px;width:47px">2.909</div>
<div class="rh" style="top:165px">50.0</div>
<div class="dc" style="left:76px;top:165px;width:39px">5.616</div>
<div class="dc" style="left:116px;top:165px;width:39px">5.590</div>
<div class="dc" style="left:156px;top:165px;width:39px">5.540</div>
<div class="dc" style="left:196px;top:165px;width:39px">5.510</div>
<div class="dc" style="left:236px;top:165px;width:39px">5.480</div>
<div class="dc" style="left:276px;top:165px;width:39px">5.420</div>
<div class="dc" style="left:316px;top:165px;width:39px">5.350</div>
<div class="dc" style="left:356px;top:165px;width:39px">5.250</div>
<div class="dc" style="left:396px;top:165px;width:39px">5.150</div>
<div class="dc" style="left:436px;top:165px;width:39px">5.050</div>
<div class="dc" style="left:476px;top:165px;width:39px">4.950</div>
<div class="dc" style="left:516px;top:165px;width:39px">4.850</div>
<div class="dc" style="left:556px;top:165px;width:39px">4.750</div>
<div class="dc" style="left:596px;top:165px;width:39px">4.700</div>
<div class="dc" style="left:636px;top:165px;width:47px">4.650</div>
<div class="dc" style="left:684px;top:165px;width:47px">4.600</div>
<div class="dc" style="left:732px;top:165px;width:47px">4.550</div>
<div class="dc" style="left:780px;top:165px;width:47px">4.510</div>
<div class="dc" style="left:828px;top:165px;width:47px">4.460</div>
<div class="dc" style="left:876px;top:165px;width:47px">4.410</div>
<div class="dc" style="left:924px;top:165px;width:47px">4.340</div>
<div class="dc" style="left:972px;top:165px;width:47px">4.260</div>
<div class="dc" style="left:1020px;top:165px;width:47px">4.200</div>
<div class="dc" style="left:1068px;top:165px;width:47px">4.133</div>
<div class="dc" style="left:1116px;top:165px;width:47px">4.104</div>
<div class="dc" style="left:1164px;top:165px;width:47px">4.095</div>
<div class="dc" style="left:1212px;top:165px;width:47px">4.095</div>
<div class="dc" style="left:1260px;top:165px;width:47px">4.085</div>
<div class="dc" style="left:1308px;top:165px;width:47px">4.085</div>
<div class="dc" style="left:1356px;top:165px;width:47px">4.085</div>
<div class="dc" style="left:1404px;top:165px;width:47px">4.085</div>
<div class="rh" style="top:187px">66.0</div>
<div class="dc" style="left:76px;top:187px;width:39px">6.032</div>
<div class="dc" style="left:116px;top:187px;width:39px">6.117</div>
<div class="dc" style="left:156px;top:187px;width:39px">6.110</div>
<div class="dc" style="left:196px;top:187px;width:39px">6.080</div>
<div class="dc" style="left:236px;top:187px;width:39px">6.110</div>
<div class="dc" style="left:276px;top:187px;width:39px">6.110</div>
<div class="dc" style="left:316px;top:187px;width:39px">6.050</div>
<div class="dc" style="left:356px;top:187px;width:39px">6.000</div>
<div class="dc" style="left:396px;top:187px;width:39px">5.950</div>
<div class="dc" style="left:436px;top:187px;width:39px">5.900</div>
<div class="dc" style="left:476px;top:187px;width:39px">5.800</div>
<div class="dc" style="left:516px;top:187px;width:39px">5.700</div>
<div class="dc" style="left:556px;top:187px;width:39px">5.650</div>
<div class="dc" style="left:596px;top:187px;width:39px">5.600</div>
<div class="dc" style="left:636px;top:187px;width:47px">5.550</div>
<div class="dc" style="left:684px;top:187px;width:47px">5.500</div>
<div class="dc" style="left:732px;top:187px;width:47px">5.480</div>
<div class="dc" style="left:780px;top:187px;width:47px">5.440</div>
<div class="dc" style="left:828px;top:187px;width:47px">5.419</div>
<div class="dc" style="left:876px;top:187px;width:47px">5.387</div>
<div class="dc" style="left:924px;top:187px;width:47px">5.316</div>
<div class="dc" style="left:972px;top:187px;width:47px">5.240</div>
<div class="dc" style="left:1020px;top:187px;width:47px">5.170</div>
<div class="dc" style="left:1068px;top:187px;width:47px">5.130</div>
<div class="dc" style="left:1116px;top:187px;width:47px">5.100</div>
<div class="dc" style="left:1164px;top:187px;width:47px">5.080</div>
<div class="dc" style="left:1212px;top:187px;width:47px">5.060</div>
<div class="dc" style="left:1260px;top:187px;width:47px">5.050</div>
<div class="dc" style="left:1308px;top:187px;width:47px">5.050</div>
<div class="dc" style="left:1356px;top:187px;width:47px">5.050</div>
<div class="dc" style="left:1404px;top:187px;width:47px">5.050</div>
<div class="rh" style="top:209px">75.0</div>
<div class="dc" style="left:76px;top:209px;width:39px">5.900</div>
<div class="dc" style="left:116px;top:209px;width:39px">6.030</div>
<div class="dc" style="left:156px;top:209px;width:39px">6.150</div>
<div class="dc" style="left:196px;top:209px;width:39px">6.230</div>
<div class="dc" style="left:236px;top:209px;width:39px">6.300</div>
<div class="dc" style="left:276px;top:209px;width:39px">6.330</div>
<div class="dc" style="left:316px;top:209px;width:39px">6.300</div>
<div class="dc" style="left:356px;top:209px;width:39px">6.250</div>
<div class="dc" style="left:396px;top:209px;width:39px">6.200</div>
<div class="dc" style="left:436px;top:209px;width:39px">6.150</div>
<div class="dc" style="left:476px;top:209px;width:39px">6.100</div>
<div class="dc" style="left:516px;top:209px;width:39px">6.050</div>
<div class="dc" style="left:556px;top:209px;width:39px">6.000</div>
<div class="dc" style="left:596px;top:209px;width:39px">5.980</div>
<div class="dc" style="left:636px;top:209px;width:47px">5.950</div>
<div class="dc" style="left:684px;top:209px;width:47px">5.920</div>
<div class="dc" style="left:732px;top:209px;width:47px">5.900</div>
<div class="dc" style="left:780px;top:209px;width:47px">5.800</div>
<div class="dc" style="left:828px;top:209px;width:47px">5.700</div>
<div class="dc" style="left:876px;top:209px;width:47px">5.640</div>
<div class="dc" style="left:924px;top:209px;width:47px">5.580</div>
<div class="dc" style="left:972px;top:209px;width:47px">5.540</div>
<div class="dc" style="left:1020px;top:209px;width:47px">5.490</div>
<div class="dc" style="left:1068px;top:209px;width:47px">5.460</div>
<div class="dc" style="left:1116px;top:209px;width:47px">5.430</div>
<div class="dc" style="left:1164px;top:209px;width:47px">5.390</div>
<div class="dc" style="left:1212px;top:209px;width:47px">5.370</div>
<div class="dc" style="left:1260px;top:209px;width:47px">5.350</div>
<div class="dc" style="left:1308px;top:209px;width:47px">5.350</div>
<div class="dc" style="left:1356px;top:209px;width:47px">5.350</div>
<div class="dc" style="left:1404px;top:209px;width:47px">5.350</div>
<div class="rh" style="top:231px">100.0</div>
<div class="dc" style="left:76px;top:231px;width:39px">5.990</div>
<div class="dc" style="left:116px;top:231px;width:39px">6.160</div>
<div class="dc" style="left:156px;top:231px;width:39px">6.267</div>
<div class="dc" style="left:196px;top:231px;width:39px">6.386</div>
<div class="dc" style="left:236px;top:231px;width:39px">6.504</div>
<div class="dc" style="left:276px;top:231px;width:39px">6.613</div>
<div class="dc" style="left:316px;top:231px;width:39px">6.600</div>
<div class="dc" style="left:356px;top:231px;width:39px">6.580</div>
<div class="dc" style="left:396px;top:231px;width:39px">6.560</div>
<div class="dc" style="left:436px;top:231px;width:39px">6.540</div>
<div class="dc" style="left:476px;top:231px;width:39px">6.520</div>
<div class="dc" style="left:516px;top:231px;width:39px">6.500</div>
<div class="dc" style="left:556px;top:231px;width:39px">6.480</div>
<div class="dc" style="left:596px;top:231px;width:39px">6.460</div>
<div class="dc" style="left:636px;top:231px;width:47px">6.440</div>
<div class="dc" style="left:684px;top:231px;width:47px">6.430</div>
<div class="dc" style="left:732px;top:231px;width:47px">6.420</div>
<div class="dc" style="left:780px;top:231px;width:47px">6.390</div>
<div class="dc" style="left:828px;top:231px;width:47px">6.355</div>
<div class="dc" style="left:876px;top:231px;width:47px">6.273</div>
<div class="dc" style="left:924px;top:231px;width:47px">6.191</div>
<div class="dc" style="left:972px;top:231px;width:47px">6.110</div>
<div class="dc" style="left:1020px;top:231px;width:47px">6.038</div>
<div class="dc" style="left:1068px;top:231px;width:47px">5.998</div>
<div class="dc" style="left:1116px;top:231px;width:47px">5.957</div>
<div class="dc" style="left:1164px;top:231px;width:47px">5.906</div>
<div class="dc" style="left:1212px;top:231px;width:47px">5.865</div>
<div class="dc" style="left:1260px;top:231px;width:47px">5.845</div>
<div class="dc" style="left:1308px;top:231px;width:47px">5.845</div>
<div class="dc" style="left:1356px;top:231px;width:47px">5.845</div>
<div class="dc" style="left:1404px;top:231px;width:47px">5.845</div>
 <div class="a" style="left:0;top:0;width:76px;height:33px;background:#808080;border:1px solid #000;overflow:hidden">
  <svg width="74" height="31" style="position:absolute;left:0;top:0"><line x1="0" y1="0" x2="74" y2="31" stroke="#fff" stroke-width="1.2"/></svg>
  <div class="a" style="left:53px;top:1px;font-size:9.5px;line-height:11px;color:#f4f2e6">rpm</div>
  <div class="a" style="left:0px;top:17px;font-size:9.5px;line-height:11px;letter-spacing:-0.25px;color:#f4f2e6">Tps (%)</div>
 </div>
 <div class="a" style="left:0;top:363px;width:1441px;height:1px;background:#fbfbfb"></div>
 <div class="a" style="left:734px;top:371px;width:488px;height:2px;background:#6e6e6e;border-radius:1px"></div>
</div>
<div class="a" style="left:450.60px;top:77.00px;font-size:12.5px;line-height:14px;transform:scaleX(0.8565);transform-origin:0.00px 0;">Table</div>
<div class="a" style="left:492.00px;top:79.00px;font-size:12.5px;line-height:14px;transform:scaleX(0.8451);transform-origin:0.00px 0;">2D</div>
<div class="a" style="left:533.70px;top:79.00px;font-size:12.5px;line-height:14px;transform:scaleX(0.8638);transform-origin:0.00px 0;">3D</div>
<div class="a" style="left:928.50px;top:104.00px;font-size:15.5px;line-height:18px;letter-spacing:-0.008px;font-weight:bold;">Map 1  -  Injection main #1 (ms)  -  0.0 Tps (%) @250 rpm</div>
<div class="a" style="left:454.90px;top:523.00px;font-size:11.0px;line-height:13px;transform:scaleX(0.9375);transform-origin:0.00px 0;">X: rpm (min: 0, max: 20000)</div>
<div class="a" style="left:455.00px;top:536.00px;font-size:11.0px;line-height:13px;transform:scaleX(0.9405);transform-origin:0.00px 0;">Y: Tps (%) (min: 0.0, max: 100.0)</div>
<div class="a" style="left:454.00px;top:549.00px;font-size:11.0px;line-height:13px;transform:scaleX(0.9470);transform-origin:0.00px 0;">f(X, Y): ms (min: 0.000, max: 32.000)</div>

<div class="a" style="left:1791px;top:517px;width:13px;height:13px;border:1px solid #5a5a5a;border-radius:3px;background:#f3f3f3"></div>
<div class="a" style="left:1810.30px;top:518.00px;font-size:11.0px;line-height:13px;transform:scaleX(0.9319);transform-origin:0.00px 0;">Heatmap</div>
<div class="a" style="left:1791px;top:533px;width:13px;height:13px;border:1px solid #c8c8c8;border-radius:3px;background:#f8f8f8"></div>
<div class="a" style="left:1810.30px;top:533.00px;font-size:11.0px;line-height:13px;color:#58606a;transform:scaleX(0.9696);transform-origin:0.00px 0;">Value tracking</div>
<div class="a" style="left:1791px;top:549px;width:13px;height:13px;border-radius:3px;background:#0f62c4"></div>
<svg class="a" style="left:1791px;top:549px" width="13" height="13"><path d="M3.5 6.8l2 2 4-4.5" fill="none" stroke="#fff" stroke-width="1.1"/></svg>
<div class="a" style="left:1810.30px;top:550.00px;font-size:11.0px;line-height:13px;transform:scaleX(0.9692);transform-origin:0.00px 0;">Lock breakpoints</div>

<div class="a" style="left:439px;top:580px;width:1470px;height:420px;border:1px solid #6e6e6e;border-right:none"></div>
<div class="a" style="left:473.70px;top:593.00px;font-size:14.0px;line-height:16px;color:#567272;transform:scaleX(0.9746);transform-origin:0.00px 0;">INJ1 TIME</div>
<div class="a" style="left:544px;top:589px;width:99px;height:25px;border:1px solid #fbfbfb;border-bottom:1px solid #7c7c7c;border-radius:2px;background:#f0f0f0"></div><div class="a" style="left:631px;top:602px;width:4px;height:1px;background:#111"></div><div class="a" style="left:636px;top:602px;width:4px;height:1px;background:#111"></div>
<div class="a" style="left:649px;top:594px;width:21px;height:16px;border:1px solid #5a5a5a;border-radius:3px;background:#fcfcfc"></div><svg class="a" style="left:649px;top:594px;" width="21" height="16" viewBox="0 0 21 16"><polygon points="12.06,6.14 13.53,6.32 13.53,8.08 12.06,8.26 11.62,9.32 12.53,10.49 11.29,11.73 10.12,10.82 9.06,11.26 8.88,12.73 7.12,12.73 6.94,11.26 5.88,10.82 4.71,11.73 3.47,10.49 4.38,9.32 3.94,8.26 2.47,8.08 2.47,6.32 3.94,6.14 4.38,5.08 3.47,3.91 4.71,2.67 5.88,3.58 6.94,3.14 7.12,1.67 8.88,1.67 9.06,3.14 10.12,3.58 11.29,2.67 12.53,3.91 11.62,5.08" fill="#2660ac"/><circle cx="8" cy="7.2" r="2.7" fill="#fff"/><circle cx="8" cy="7.2" r="2.1" fill="none" stroke="#b8c0cc" stroke-width="0.8"/><circle cx="15.6" cy="11.5" r="2.1" fill="#fff" stroke="#ee5a1c" stroke-width="1.2"/></svg>
<div class="a" style="left:677px;top:594px;width:21px;height:16px;border:1px solid #a8a8a8;border-radius:3px;background:#e9e9e9"></div><svg class="a" style="left:677px;top:594px;" width="21" height="16" viewBox="0 0 21 16"><path d="M6.5 1v14 M14.5 1v14" stroke="#a0a0a0" stroke-width="1"/><path d="M1 10L2.4 10.7L4.8 7.3L6.9 7.3L9.5 9.7L13 3.8L15.2 7.3L17.6 9.5L20.2 6" fill="none" stroke="#a0a0a0" stroke-width="1"/></svg>
<div class="a" style="left:753.30px;top:593.00px;font-size:14.0px;line-height:16px;color:#3d43d6;">INJ3 TIME</div>
<div class="a" style="left:1175px;top:594px;width:21px;height:16px;border:1px solid #5a5a5a;border-radius:3px;background:#fcfcfc"></div><svg class="a" style="left:1175px;top:594px;" width="21" height="16" viewBox="0 0 21 16"><polygon points="12.06,6.14 13.53,6.32 13.53,8.08 12.06,8.26 11.62,9.32 12.53,10.49 11.29,11.73 10.12,10.82 9.06,11.26 8.88,12.73 7.12,12.73 6.94,11.26 5.88,10.82 4.71,11.73 3.47,10.49 4.38,9.32 3.94,8.26 2.47,8.08 2.47,6.32 3.94,6.14 4.38,5.08 3.47,3.91 4.71,2.67 5.88,3.58 6.94,3.14 7.12,1.67 8.88,1.67 9.06,3.14 10.12,3.58 11.29,2.67 12.53,3.91 11.62,5.08" fill="#2660ac"/><circle cx="8" cy="7.2" r="2.7" fill="#fff"/><circle cx="8" cy="7.2" r="2.1" fill="none" stroke="#b8c0cc" stroke-width="0.8"/><circle cx="15.6" cy="11.5" r="2.1" fill="#fff" stroke="#ee5a1c" stroke-width="1.2"/></svg>
<div class="a" style="left:1203px;top:594px;width:21px;height:16px;border:1px solid #a8a8a8;border-radius:3px;background:#e9e9e9"></div><svg class="a" style="left:1203px;top:594px;" width="21" height="16" viewBox="0 0 21 16"><path d="M6.5 1v14 M14.5 1v14" stroke="#a0a0a0" stroke-width="1"/><path d="M1 10L2.4 10.7L4.8 7.3L6.9 7.3L9.5 9.7L13 3.8L15.2 7.3L17.6 9.5L20.2 6" fill="none" stroke="#a0a0a0" stroke-width="1"/></svg>
<div class="a" style="left:1254.20px;top:593.00px;font-size:14.0px;line-height:16px;color:#ee4b16;transform:scaleX(0.9564);transform-origin:0.00px 0;">SYNC ERR</div>
<div class="a" style="left:1330px;top:589px;width:99px;height:25px;border:1px solid #fbfbfb;border-bottom:1px solid #7c7c7c;border-radius:2px;background:#f0f0f0"></div><div class="a" style="left:1417px;top:602px;width:4px;height:1px;background:#111"></div><div class="a" style="left:1422px;top:602px;width:4px;height:1px;background:#111"></div>
<div class="a" style="left:459.90px;top:627.00px;font-size:14.0px;line-height:16px;color:#567272;transform:scaleX(0.9733);transform-origin:0.00px 0;">INJ1 PHASE</div>
<div class="a" style="left:544px;top:623px;width:99px;height:25px;border:1px solid #fbfbfb;border-bottom:1px solid #7c7c7c;border-radius:2px;background:#f0f0f0"></div><div class="a" style="left:631px;top:636px;width:4px;height:1px;background:#111"></div><div class="a" style="left:636px;top:636px;width:4px;height:1px;background:#111"></div>
<div class="a" style="left:649px;top:628px;width:21px;height:16px;border:1px solid #5a5a5a;border-radius:3px;background:#fcfcfc"></div><svg class="a" style="left:649px;top:628px;" width="21" height="16" viewBox="0 0 21 16"><polygon points="12.06,6.14 13.53,6.32 13.53,8.08 12.06,8.26 11.62,9.32 12.53,10.49 11.29,11.73 10.12,10.82 9.06,11.26 8.88,12.73 7.12,12.73 6.94,11.26 5.88,10.82 4.71,11.73 3.47,10.49 4.38,9.32 3.94,8.26 2.47,8.08 2.47,6.32 3.94,6.14 4.38,5.08 3.47,3.91 4.71,2.67 5.88,3.58 6.94,3.14 7.12,1.67 8.88,1.67 9.06,3.14 10.12,3.58 11.29,2.67 12.53,3.91 11.62,5.08" fill="#2660ac"/><circle cx="8" cy="7.2" r="2.7" fill="#fff"/><circle cx="8" cy="7.2" r="2.1" fill="none" stroke="#b8c0cc" stroke-width="0.8"/><circle cx="15.6" cy="11.5" r="2.1" fill="#fff" stroke="#ee5a1c" stroke-width="1.2"/></svg>
<div class="a" style="left:677px;top:628px;width:21px;height:16px;border:1px solid #a8a8a8;border-radius:3px;background:#e9e9e9"></div><svg class="a" style="left:677px;top:628px;" width="21" height="16" viewBox="0 0 21 16"><path d="M6.5 1v14 M14.5 1v14" stroke="#a0a0a0" stroke-width="1"/><path d="M1 10L2.4 10.7L4.8 7.3L6.9 7.3L9.5 9.7L13 3.8L15.2 7.3L17.6 9.5L20.2 6" fill="none" stroke="#a0a0a0" stroke-width="1"/></svg>
<div class="a" style="left:1175px;top:628px;width:21px;height:16px;border:1px solid #5a5a5a;border-radius:3px;background:#fcfcfc"></div><svg class="a" style="left:1175px;top:628px;" width="21" height="16" viewBox="0 0 21 16"><polygon points="12.06,6.14 13.53,6.32 13.53,8.08 12.06,8.26 11.62,9.32 12.53,10.49 11.29,11.73 10.12,10.82 9.06,11.26 8.88,12.73 7.12,12.73 6.94,11.26 5.88,10.82 4.71,11.73 3.47,10.49 4.38,9.32 3.94,8.26 2.47,8.08 2.47,6.32 3.94,6.14 4.38,5.08 3.47,3.91 4.71,2.67 5.88,3.58 6.94,3.14 7.12,1.67 8.88,1.67 9.06,3.14 10.12,3.58 11.29,2.67 12.53,3.91 11.62,5.08" fill="#2660ac"/><circle cx="8" cy="7.2" r="2.7" fill="#fff"/><circle cx="8" cy="7.2" r="2.1" fill="none" stroke="#b8c0cc" stroke-width="0.8"/><circle cx="15.6" cy="11.5" r="2.1" fill="#fff" stroke="#ee5a1c" stroke-width="1.2"/></svg>
<div class="a" style="left:1203px;top:628px;width:21px;height:16px;border:1px solid #a8a8a8;border-radius:3px;background:#e9e9e9"></div><svg class="a" style="left:1203px;top:628px;" width="21" height="16" viewBox="0 0 21 16"><path d="M6.5 1v14 M14.5 1v14" stroke="#a0a0a0" stroke-width="1"/><path d="M1 10L2.4 10.7L4.8 7.3L6.9 7.3L9.5 9.7L13 3.8L15.2 7.3L17.6 9.5L20.2 6" fill="none" stroke="#a0a0a0" stroke-width="1"/></svg>
<div class="a" style="left:1261.50px;top:627.00px;font-size:14.0px;line-height:16px;color:#ee4b16;transform:scaleX(0.9702);transform-origin:0.00px 0;">ENG POS</div>
<div class="a" style="left:1330px;top:623px;width:99px;height:25px;border:1px solid #fbfbfb;border-bottom:1px solid #7c7c7c;border-radius:2px;background:#f0f0f0"></div><div class="a" style="left:1417px;top:636px;width:4px;height:1px;background:#111"></div><div class="a" style="left:1422px;top:636px;width:4px;height:1px;background:#111"></div>
<div class="a" style="left:473.70px;top:661.00px;font-size:14.0px;line-height:16px;color:#567272;transform:scaleX(0.9746);transform-origin:0.00px 0;">INJ2 TIME</div>
<div class="a" style="left:544px;top:657px;width:99px;height:25px;border:1px solid #fbfbfb;border-bottom:1px solid #7c7c7c;border-radius:2px;background:#f0f0f0"></div><div class="a" style="left:631px;top:670px;width:4px;height:1px;background:#111"></div><div class="a" style="left:636px;top:670px;width:4px;height:1px;background:#111"></div>
<div class="a" style="left:649px;top:662px;width:21px;height:16px;border:1px solid #5a5a5a;border-radius:3px;background:#fcfcfc"></div><svg class="a" style="left:649px;top:662px;" width="21" height="16" viewBox="0 0 21 16"><polygon points="12.06,6.14 13.53,6.32 13.53,8.08 12.06,8.26 11.62,9.32 12.53,10.49 11.29,11.73 10.12,10.82 9.06,11.26 8.88,12.73 7.12,12.73 6.94,11.26 5.88,10.82 4.71,11.73 3.47,10.49 4.38,9.32 3.94,8.26 2.47,8.08 2.47,6.32 3.94,6.14 4.38,5.08 3.47,3.91 4.71,2.67 5.88,3.58 6.94,3.14 7.12,1.67 8.88,1.67 9.06,3.14 10.12,3.58 11.29,2.67 12.53,3.91 11.62,5.08" fill="#2660ac"/><circle cx="8" cy="7.2" r="2.7" fill="#fff"/><circle cx="8" cy="7.2" r="2.1" fill="none" stroke="#b8c0cc" stroke-width="0.8"/><circle cx="15.6" cy="11.5" r="2.1" fill="#fff" stroke="#ee5a1c" stroke-width="1.2"/></svg>
<div class="a" style="left:677px;top:662px;width:21px;height:16px;border:1px solid #a8a8a8;border-radius:3px;background:#e9e9e9"></div><svg class="a" style="left:677px;top:662px;" width="21" height="16" viewBox="0 0 21 16"><path d="M6.5 1v14 M14.5 1v14" stroke="#a0a0a0" stroke-width="1"/><path d="M1 10L2.4 10.7L4.8 7.3L6.9 7.3L9.5 9.7L13 3.8L15.2 7.3L17.6 9.5L20.2 6" fill="none" stroke="#a0a0a0" stroke-width="1"/></svg>
<div class="a" style="left:753.30px;top:661.00px;font-size:14.0px;line-height:16px;color:#3d43d6;">INJ4 TIME</div>
<div class="a" style="left:1175px;top:662px;width:21px;height:16px;border:1px solid #5a5a5a;border-radius:3px;background:#fcfcfc"></div><svg class="a" style="left:1175px;top:662px;" width="21" height="16" viewBox="0 0 21 16"><polygon points="12.06,6.14 13.53,6.32 13.53,8.08 12.06,8.26 11.62,9.32 12.53,10.49 11.29,11.73 10.12,10.82 9.06,11.26 8.88,12.73 7.12,12.73 6.94,11.26 5.88,10.82 4.71,11.73 3.47,10.49 4.38,9.32 3.94,8.26 2.47,8.08 2.47,6.32 3.94,6.14 4.38,5.08 3.47,3.91 4.71,2.67 5.88,3.58 6.94,3.14 7.12,1.67 8.88,1.67 9.06,3.14 10.12,3.58 11.29,2.67 12.53,3.91 11.62,5.08" fill="#2660ac"/><circle cx="8" cy="7.2" r="2.7" fill="#fff"/><circle cx="8" cy="7.2" r="2.1" fill="none" stroke="#b8c0cc" stroke-width="0.8"/><circle cx="15.6" cy="11.5" r="2.1" fill="#fff" stroke="#ee5a1c" stroke-width="1.2"/></svg>
<div class="a" style="left:1203px;top:662px;width:21px;height:16px;border:1px solid #a8a8a8;border-radius:3px;background:#e9e9e9"></div><svg class="a" style="left:1203px;top:662px;" width="21" height="16" viewBox="0 0 21 16"><path d="M6.5 1v14 M14.5 1v14" stroke="#a0a0a0" stroke-width="1"/><path d="M1 10L2.4 10.7L4.8 7.3L6.9 7.3L9.5 9.7L13 3.8L15.2 7.3L17.6 9.5L20.2 6" fill="none" stroke="#a0a0a0" stroke-width="1"/></svg>
<div class="a" style="left:1245.40px;top:661.00px;font-size:14.0px;line-height:16px;letter-spacing:0.079px;color:#ee4b16;">ENG STATE</div>
<div class="a" style="left:1330px;top:657px;width:99px;height:25px;border:1px solid #fbfbfb;border-bottom:1px solid #7c7c7c;border-radius:2px;background:#f0f0f0"></div><div class="a" style="left:1417px;top:670px;width:4px;height:1px;background:#111"></div><div class="a" style="left:1422px;top:670px;width:4px;height:1px;background:#111"></div>
<div class="a" style="left:459.90px;top:695.00px;font-size:14.0px;line-height:16px;color:#567272;transform:scaleX(0.9733);transform-origin:0.00px 0;">INJ2 PHASE</div>
<div class="a" style="left:544px;top:691px;width:99px;height:25px;border:1px solid #fbfbfb;border-bottom:1px solid #7c7c7c;border-radius:2px;background:#f0f0f0"></div><div class="a" style="left:631px;top:704px;width:4px;height:1px;background:#111"></div><div class="a" style="left:636px;top:704px;width:4px;height:1px;background:#111"></div>
<div class="a" style="left:649px;top:696px;width:21px;height:16px;border:1px solid #5a5a5a;border-radius:3px;background:#fcfcfc"></div><svg class="a" style="left:649px;top:696px;" width="21" height="16" viewBox="0 0 21 16"><polygon points="12.06,6.14 13.53,6.32 13.53,8.08 12.06,8.26 11.62,9.32 12.53,10.49 11.29,11.73 10.12,10.82 9.06,11.26 8.88,12.73 7.12,12.73 6.94,11.26 5.88,10.82 4.71,11.73 3.47,10.49 4.38,9.32 3.94,8.26 2.47,8.08 2.47,6.32 3.94,6.14 4.38,5.08 3.47,3.91 4.71,2.67 5.88,3.58 6.94,3.14 7.12,1.67 8.88,1.67 9.06,3.14 10.12,3.58 11.29,2.67 12.53,3.91 11.62,5.08" fill="#2660ac"/><circle cx="8" cy="7.2" r="2.7" fill="#fff"/><circle cx="8" cy="7.2" r="2.1" fill="none" stroke="#b8c0cc" stroke-width="0.8"/><circle cx="15.6" cy="11.5" r="2.1" fill="#fff" stroke="#ee5a1c" stroke-width="1.2"/></svg>
<div class="a" style="left:677px;top:696px;width:21px;height:16px;border:1px solid #a8a8a8;border-radius:3px;background:#e9e9e9"></div><svg class="a" style="left:677px;top:696px;" width="21" height="16" viewBox="0 0 21 16"><path d="M6.5 1v14 M14.5 1v14" stroke="#a0a0a0" stroke-width="1"/><path d="M1 10L2.4 10.7L4.8 7.3L6.9 7.3L9.5 9.7L13 3.8L15.2 7.3L17.6 9.5L20.2 6" fill="none" stroke="#a0a0a0" stroke-width="1"/></svg>
<div class="a" style="left:747.60px;top:695.00px;font-size:14.0px;line-height:16px;color:#3d43d6;">INJ4 PHASE</div>
<div class="a" style="left:1175px;top:696px;width:21px;height:16px;border:1px solid #5a5a5a;border-radius:3px;background:#fcfcfc"></div><svg class="a" style="left:1175px;top:696px;" width="21" height="16" viewBox="0 0 21 16"><polygon points="12.06,6.14 13.53,6.32 13.53,8.08 12.06,8.26 11.62,9.32 12.53,10.49 11.29,11.73 10.12,10.82 9.06,11.26 8.88,12.73 7.12,12.73 6.94,11.26 5.88,10.82 4.71,11.73 3.47,10.49 4.38,9.32 3.94,8.26 2.47,8.08 2.47,6.32 3.94,6.14 4.38,5.08 3.47,3.91 4.71,2.67 5.88,3.58 6.94,3.14 7.12,1.67 8.88,1.67 9.06,3.14 10.12,3.58 11.29,2.67 12.53,3.91 11.62,5.08" fill="#2660ac"/><circle cx="8" cy="7.2" r="2.7" fill="#fff"/><circle cx="8" cy="7.2" r="2.1" fill="none" stroke="#b8c0cc" stroke-width="0.8"/><circle cx="15.6" cy="11.5" r="2.1" fill="#fff" stroke="#ee5a1c" stroke-width="1.2"/></svg>
<div class="a" style="left:1203px;top:696px;width:21px;height:16px;border:1px solid #a8a8a8;border-radius:3px;background:#e9e9e9"></div><svg class="a" style="left:1203px;top:696px;" width="21" height="16" viewBox="0 0 21 16"><path d="M6.5 1v14 M14.5 1v14" stroke="#a0a0a0" stroke-width="1"/><path d="M1 10L2.4 10.7L4.8 7.3L6.9 7.3L9.5 9.7L13 3.8L15.2 7.3L17.6 9.5L20.2 6" fill="none" stroke="#a0a0a0" stroke-width="1"/></svg>
<div class="a" style="left:1253.00px;top:695.00px;font-size:14.0px;line-height:16px;color:#ee4b16;transform:scaleX(0.9675);transform-origin:0.00px 0;">ENG REVS</div>
<div class="a" style="left:1330px;top:691px;width:99px;height:25px;border:1px solid #fbfbfb;border-bottom:1px solid #7c7c7c;border-radius:2px;background:#f0f0f0"></div><div class="a" style="left:1417px;top:704px;width:4px;height:1px;background:#111"></div><div class="a" style="left:1422px;top:704px;width:4px;height:1px;background:#111"></div>
<div class="a" style="left:459.90px;top:730.00px;font-size:12.5px;line-height:14px;color:#567272;transform:scaleX(0.8551);transform-origin:0.00px 0;">ING BASE TIME</div>
<div class="a" style="left:544px;top:725px;width:99px;height:25px;border:1px solid #fbfbfb;border-bottom:1px solid #7c7c7c;border-radius:2px;background:#f0f0f0"></div><div class="a" style="left:631px;top:738px;width:4px;height:1px;background:#111"></div><div class="a" style="left:636px;top:738px;width:4px;height:1px;background:#111"></div>
<div class="a" style="left:649px;top:730px;width:21px;height:16px;border:1px solid #5a5a5a;border-radius:3px;background:#fcfcfc"></div><svg class="a" style="left:649px;top:730px;" width="21" height="16" viewBox="0 0 21 16"><polygon points="12.06,6.14 13.53,6.32 13.53,8.08 12.06,8.26 11.62,9.32 12.53,10.49 11.29,11.73 10.12,10.82 9.06,11.26 8.88,12.73 7.12,12.73 6.94,11.26 5.88,10.82 4.71,11.73 3.47,10.49 4.38,9.32 3.94,8.26 2.47,8.08 2.47,6.32 3.94,6.14 4.38,5.08 3.47,3.91 4.71,2.67 5.88,3.58 6.94,3.14 7.12,1.67 8.88,1.67 9.06,3.14 10.12,3.58 11.29,2.67 12.53,3.91 11.62,5.08" fill="#2660ac"/><circle cx="8" cy="7.2" r="2.7" fill="#fff"/><circle cx="8" cy="7.2" r="2.1" fill="none" stroke="#b8c0cc" stroke-width="0.8"/><circle cx="15.6" cy="11.5" r="2.1" fill="#fff" stroke="#ee5a1c" stroke-width="1.2"/></svg>
<div class="a" style="left:677px;top:730px;width:21px;height:16px;border:1px solid #a8a8a8;border-radius:3px;background:#e9e9e9"></div><svg class="a" style="left:677px;top:730px;" width="21" height="16" viewBox="0 0 21 16"><path d="M6.5 1v14 M14.5 1v14" stroke="#a0a0a0" stroke-width="1"/><path d="M1 10L2.4 10.7L4.8 7.3L6.9 7.3L9.5 9.7L13 3.8L15.2 7.3L17.6 9.5L20.2 6" fill="none" stroke="#a0a0a0" stroke-width="1"/></svg>
<div class="a" style="left:749.00px;top:728.00px;font-size:14.0px;line-height:16px;color:#3d43d6;">IGN BASE</div>
<div class="a" style="left:1175px;top:730px;width:21px;height:16px;border:1px solid #5a5a5a;border-radius:3px;background:#fcfcfc"></div><svg class="a" style="left:1175px;top:730px;" width="21" height="16" viewBox="0 0 21 16"><polygon points="12.06,6.14 13.53,6.32 13.53,8.08 12.06,8.26 11.62,9.32 12.53,10.49 11.29,11.73 10.12,10.82 9.06,11.26 8.88,12.73 7.12,12.73 6.94,11.26 5.88,10.82 4.71,11.73 3.47,10.49 4.38,9.32 3.94,8.26 2.47,8.08 2.47,6.32 3.94,6.14 4.38,5.08 3.47,3.91 4.71,2.67 5.88,3.58 6.94,3.14 7.12,1.67 8.88,1.67 9.06,3.14 10.12,3.58 11.29,2.67 12.53,3.91 11.62,5.08" fill="#2660ac"/><circle cx="8" cy="7.2" r="2.7" fill="#fff"/><circle cx="8" cy="7.2" r="2.1" fill="none" stroke="#b8c0cc" stroke-width="0.8"/><circle cx="15.6" cy="11.5" r="2.1" fill="#fff" stroke="#ee5a1c" stroke-width="1.2"/></svg>
<div class="a" style="left:1203px;top:730px;width:21px;height:16px;border:1px solid #a8a8a8;border-radius:3px;background:#e9e9e9"></div><svg class="a" style="left:1203px;top:730px;" width="21" height="16" viewBox="0 0 21 16"><path d="M6.5 1v14 M14.5 1v14" stroke="#a0a0a0" stroke-width="1"/><path d="M1 10L2.4 10.7L4.8 7.3L6.9 7.3L9.5 9.7L13 3.8L15.2 7.3L17.6 9.5L20.2 6" fill="none" stroke="#a0a0a0" stroke-width="1"/></svg>
<div class="a" style="left:1316.90px;top:729.00px;font-size:14.0px;line-height:16px;color:#ee4b16;">λ</div>
<div class="a" style="left:1330px;top:725px;width:99px;height:25px;border:1px solid #fbfbfb;border-bottom:1px solid #7c7c7c;border-radius:2px;background:#f0f0f0"></div><div class="a" style="left:1417px;top:738px;width:4px;height:1px;background:#111"></div><div class="a" style="left:1422px;top:738px;width:4px;height:1px;background:#111"></div>
<svg class="a" style="left:1877px;top:72px;" width="20" height="20" viewBox="0 0 20 20"><circle cx="9.8" cy="9.2" r="8.1" fill="none" stroke="#111" stroke-width="1.3"/><path d="M3.8 3.6L15.8 15.4" stroke="#111" stroke-width="1.4"/><path d="M12.4 3.9L16.2 7.7L13.4 10.5L12.8 13.2L7.2 7.6L9.9 6.9z" fill="#111"/><path d="M9.6 11.0L5.6 15.0" stroke="#333" stroke-width="1"/></svg>
<svg class="a" style="left:1886px;top:585px;" width="20" height="20" viewBox="0 0 20 20"><circle cx="9.8" cy="9.2" r="8.1" fill="none" stroke="#111" stroke-width="1.3"/><path d="M3.8 3.6L15.8 15.4" stroke="#111" stroke-width="1.4"/><path d="M12.4 3.9L16.2 7.7L13.4 10.5L12.8 13.2L7.2 7.6L9.9 6.9z" fill="#111"/><path d="M9.6 11.0L5.6 15.0" stroke="#333" stroke-width="1"/></svg>
<div class="a" style="left:446.70px;top:756.00px;font-size:9.5px;line-height:11px;color:#a9b49a;transform:scaleX(0.9845);transform-origin:0.00px 0;">0.2</div>
<div class="a" style="left:446.70px;top:799.00px;font-size:9.5px;line-height:11px;color:#a9b49a;transform:scaleX(0.9845);transform-origin:0.00px 0;">0.1</div>
<div class="a" style="left:455.00px;top:841.00px;font-size:9.5px;line-height:11px;color:#a9b49a;">0</div>
<div class="a" style="left:443.20px;top:884.00px;font-size:9.5px;line-height:11px;letter-spacing:0.044px;color:#a9b49a;">-0.1</div>
<div class="a" style="left:443.20px;top:925.00px;font-size:9.5px;line-height:11px;letter-spacing:0.044px;color:#a9b49a;">-0.2</div>
<div class="a" style="left:445.20px;top:937.00px;font-size:10.0px;line-height:12px;letter-spacing:-0.033px;">00:00:00</div>
<div class="a" style="left:1156.00px;top:937.00px;font-size:10.0px;line-height:12px;">00:00:00</div>
<div class="a" style="left:1147.30px;top:946.00px;font-size:9.75px;line-height:11px;letter-spacing:-0.015px;">Elapsed time</div>
<div class="a" style="left:1866.90px;top:937.00px;font-size:10.0px;line-height:12px;letter-spacing:-0.033px;">00:00:02</div>
<svg class="a" style="left:449px;top:974px;" width="21" height="21" viewBox="0 0 21 21"><circle cx="10.5" cy="10.5" r="9.3" fill="#ececec" stroke="#8a8a8a" stroke-width="1.2"/><rect x="7" y="6" width="2.5" height="9" fill="#7a7a7a"/><rect x="11.5" y="6" width="2.5" height="9" fill="#7a7a7a"/></svg>
<div class="a" style="left:538px;top:974px;width:21px;height:20px;border:1px solid #9a9a9a;border-radius:3px;background:#e6e6e6"></div><svg class="a" style="left:538px;top:974px;" width="21" height="20" viewBox="0 0 21 20"><circle cx="8" cy="10" r="3.5" fill="none" stroke="#8a8a8a" stroke-width="1.4"/><path d="M10.5 12.5l5 5 M13 4.5h5 M15.5 2v5" fill="none" stroke="#8a8a8a" stroke-width="1.4"/></svg>
<div class="a" style="left:568px;top:974px;width:21px;height:20px;border:1px solid #9a9a9a;border-radius:3px;background:#e6e6e6"></div><svg class="a" style="left:568px;top:974px;" width="21" height="20" viewBox="0 0 21 20"><circle cx="8" cy="10" r="3.5" fill="none" stroke="#8a8a8a" stroke-width="1.4"/><path d="M10.5 12.5l5 5 M13 4.5h5" fill="none" stroke="#8a8a8a" stroke-width="1.4"/></svg>
<div class="a" style="left:598px;top:974px;width:21px;height:20px;border:1px solid #9a9a9a;border-radius:3px;background:#e6e6e6"></div><svg class="a" style="left:598px;top:974px;" width="21" height="20" viewBox="0 0 21 20"><circle cx="10" cy="9" r="3.5" fill="none" stroke="#8a8a8a" stroke-width="1.4"/><path d="M12.5 11.5l4 4 M3 12v5h5 M13 3h5v5" fill="none" stroke="#8a8a8a" stroke-width="1.4"/></svg>
<div class="a" style="left:658px;top:974px;width:21px;height:20px;border:1px solid #555;border-radius:3px;background:#fafafa"></div>
<svg class="a" style="left:658px;top:974px;" width="21" height="20" viewBox="0 0 21 20"><ellipse cx="11" cy="16.8" rx="6" ry="1.3" fill="#c4c4c4"/><path d="M3.5 11.5L8.5 16.5L13.9 11.1L8.9 6.1z" fill="#e8946a"/><path d="M8.9 6.1L13.9 11.1L17.5 7.5L12.5 2.5z" fill="#66706f"/></svg>
<div class="a" style="left:0;top:1000px;width:1904px;height:16px;background:#f0f0f0"></div>
<svg class="a" style="left:-6px;top:1004px;" width="16" height="14" viewBox="0 0 16 14"><circle cx="7" cy="8" r="6.8" fill="#2f6e35"/><path d="M0.5 7.5c2 .5 4 1 5.5 2.5s3.5 2 6.5 2.5c-1 1.8-3 3.3-5.5 3.3-3.8 0-6.8-3-6.5-8.3z" fill="#050505"/><ellipse cx="7.5" cy="5" rx="2" ry="0.9" fill="#e6eea0" transform="rotate(20 7.5 5)"/><path d="M3 2.5a7 7 0 0 1 8 0" stroke="#111" stroke-width="1" fill="none"/></svg>
<div class="a" style="left:12.20px;top:1006.00px;font-size:12.0px;line-height:14px;transform:scaleX(0.9555);transform-origin:0.00px 0;">Device: Taipan</div>
<div class="a" style="left:94px;top:1002px;width:1px;height:14px;background:#a8a8a8"></div>
<div class="a" style="left:271px;top:1002px;width:1px;height:14px;background:#a8a8a8"></div>
<div class="a" style="left:337px;top:1002px;width:1px;height:14px;background:#a8a8a8"></div>
<div class="a" style="left:388px;top:1002px;width:1px;height:14px;background:#a8a8a8"></div>
<div class="a" style="left:495px;top:1002px;width:1px;height:14px;background:#a8a8a8"></div>
<div class="a" style="left:640px;top:1002px;width:1px;height:14px;background:#a8a8a8"></div>
<div class="a" style="left:796px;top:1002px;width:1px;height:14px;background:#a8a8a8"></div>
<svg class="a" style="left:99px;top:1004px;" width="16" height="14" viewBox="0 0 16 14"><circle cx="7" cy="8" r="6.8" fill="#2f6e35"/><path d="M0.5 7.5c2 .5 4 1 5.5 2.5s3.5 2 6.5 2.5c-1 1.8-3 3.3-5.5 3.3-3.8 0-6.8-3-6.5-8.3z" fill="#050505"/><ellipse cx="7.5" cy="5" rx="2" ry="0.9" fill="#e6eea0" transform="rotate(20 7.5 5)"/><path d="M3 2.5a7 7 0 0 1 8 0" stroke="#111" stroke-width="1" fill="none"/></svg>
<div class="a" style="left:117.00px;top:1006.00px;font-size:12.0px;line-height:14px;transform:scaleX(0.9816);transform-origin:0.00px 0;">ECU: connected to firmware</div>
<svg class="a" style="left:275px;top:1004px;" width="16" height="14" viewBox="0 0 16 14"><path d="M2.2 6V5a3.3 3.3 0 0 1 6.6 0v2" fill="none" stroke="#6a6a6a" stroke-width="1.2"/><rect x="4.8" y="6.8" width="9" height="8" rx="1.2" fill="#ff2410" stroke="#777" stroke-width="0.8"/></svg>
<div class="a" style="left:294.00px;top:1006.00px;font-size:12.0px;line-height:14px;transform:scaleX(0.9881);transform-origin:0.00px 0;">Project</div>
<svg class="a" style="left:341px;top:1004px;" width="16" height="14" viewBox="0 0 16 14"><path d="M2.2 6V5a3.3 3.3 0 0 1 6.6 0v2" fill="none" stroke="#6a6a6a" stroke-width="1.2"/><rect x="4.8" y="6.8" width="9" height="8" rx="1.2" fill="#ff2410" stroke="#777" stroke-width="0.8"/></svg>
<div class="a" style="left:359.90px;top:1006.00px;font-size:12.0px;line-height:14px;transform:scaleX(0.8448);transform-origin:0.00px 0;">ECU</div>
<div class="a" style="left:395.50px;top:1006.00px;font-size:12.0px;line-height:14px;transform:scaleX(0.9738);transform-origin:0.00px 0;">Running map: 1</div>
<div class="a" style="left:501.30px;top:1006.00px;font-size:12.0px;line-height:14px;transform:scaleX(0.9696);transform-origin:0.00px 0;">Live Measures not active</div>
<div class="a" style="left:647.20px;top:1006.00px;font-size:12.0px;line-height:14px;transform:scaleX(0.9537);transform-origin:0.00px 0;">Progress...done</div>
<div class="a" style="left:804.00px;top:1006.00px;font-size:12.0px;line-height:14px;">-</div>
<div class="a" style="left:1797px;top:1002px;width:97px;height:16px;border:1px solid #c8c8c8;background:#e6e6e6"></div>

<div class="a" style="left:760px;top:224px;width:426px;height:550px;border-radius:8px;background:#f0f0f0;box-shadow:0 14px 42px rgba(0,0,0,0.42),0 2px 6px rgba(0,0,0,0.18);overflow:hidden">
 <div class="a" style="left:0;top:0;width:426px;height:30px;background:#eff3f8"></div>
</div>
<div class="a" style="left:768.60px;top:232.00px;font-size:12.5px;line-height:14px;color:#111;transform:scaleX(0.9359);transform-origin:0.00px 0;">Manage preferences</div>
<div class="a" style="left:1116.30px;top:232.00px;font-size:12.5px;line-height:14px;color:#111;">?</div>
<svg class="a" style="left:1157px;top:232px" width="12" height="12"><path d="M1 1l10 10 M11 1L1 11" stroke="#222" stroke-width="1.1"/></svg>
<!-- tab page -->
<div class="a" style="left:773px;top:286px;width:399px;height:449px;background:#f9f9f9;border:1px solid #e6e6e6"></div>
<div class="a" style="left:775px;top:269px;width:69px;height:18px;background:#f0f0f0;border:1px solid #e3e3e3;border-bottom:none"></div>
<div class="a" style="left:780.30px;top:272.00px;font-size:11.5px;line-height:13px;transform:scaleX(0.9088);transform-origin:0.00px 0;">Default units</div>
<div class="a" style="left:844px;top:266px;width:52px;height:22px;background:#f9f9f9;border:1px solid #e3e3e3;border-bottom:none"></div>
<div class="a" style="left:850.80px;top:270.00px;font-size:11.5px;line-height:13px;transform:scaleX(0.8920);transform-origin:0.00px 0;">General</div>
<div class="a" style="left:896px;top:269px;width:50px;height:18px;background:#f0f0f0;border:1px solid #e3e3e3;border-bottom:none"></div>
<div class="a" style="left:900.10px;top:272.00px;font-size:11.5px;line-height:13px;transform:scaleX(0.9107);transform-origin:0.00px 0;">Shortcut</div>
<div class="a" style="left:946px;top:269px;width:56px;height:18px;background:#f0f0f0;border:1px solid #e3e3e3;border-bottom:none"></div>
<div class="a" style="left:952.40px;top:272.00px;font-size:11.5px;line-height:13px;transform:scaleX(0.8694);transform-origin:0.00px 0;">Multipliers</div>
<!-- grid -->
<div class="a" style="left:779px;top:301px;width:388px;height:429px;border:1px solid #000;background:#ababab;overflow:hidden">
 <div class="a" style="left:0;top:0;width:386px;height:61px;background:#8f8f8f"></div>
 <div class="a" style="left:0;top:0;width:386px;height:2px;background:#fdfdfd"></div>
 <div class="a" style="left:0;top:2px;width:386px;height:15px;background:#d3d3d3"></div>
 <div class="a" style="left:285px;top:2px;width:2px;height:15px;background:#f4f4f4"></div>
 <div class="a" style="left:0;top:18px;width:285px;height:21px;background:#f0f0f0"></div>
 <div class="a" style="left:0;top:40px;width:285px;height:21px;background:#f0f0f0"></div>
 <div class="a" style="left:0;top:0;width:1px;height:61px;background:#fdfdfd"></div>
 <div class="a" style="left:285px;top:18px;width:1px;height:21px;background:#d8d8d8"></div>
 <div class="a" style="left:285px;top:40px;width:1px;height:21px;background:#d8d8d8"></div>
 <div class="a" style="left:286px;top:18px;width:99px;height:21px;background:#fff"></div>
 <div class="a" style="left:286px;top:40px;width:99px;height:21px;background:#fff"></div>
 <div class="a" style="left:368px;top:18px;width:1px;height:21px;background:#e8e8e8"></div>
 <div class="a" style="left:368px;top:40px;width:1px;height:21px;background:#e8e8e8"></div>
 <div class="a" style="left:385px;top:0;width:1px;height:61px;background:#a8a8a8"></div>
</div>
<div class="a" style="left:886.20px;top:305.00px;font-size:12.0px;line-height:14px;color:#111;transform:scaleX(0.8767);transform-origin:0.00px 0;">DESCRIPTION</div>
<div class="a" style="left:1098.50px;top:305.00px;font-size:12.0px;line-height:14px;color:#111;transform:scaleX(0.8866);transform-origin:0.00px 0;">VALUE</div>
<div class="a" style="left:784.40px;top:325.00px;font-size:11.0px;line-height:13px;transform:scaleX(0.9442);transform-origin:0.00px 0;">Dark mode</div>
<div class="a" style="left:784.40px;top:347.00px;font-size:11.0px;line-height:13px;transform:scaleX(0.9308);transform-origin:0.00px 0;">Font size (table)</div>
<div class="a" style="left:1069.70px;top:325.00px;font-size:11.0px;line-height:13px;transform:scaleX(0.9182);transform-origin:0.00px 0;">Disabled</div>
<div class="a" style="left:1069.70px;top:347.00px;font-size:11.0px;line-height:13px;transform:scaleX(0.8876);transform-origin:0.00px 0;">12pt</div>
<svg class="a" style="left:1151px;top:328px" width="11" height="7"><path d="M1 1l4.5 4.5 4.5-4.5" fill="none" stroke="#666" stroke-width="1"/></svg>
<svg class="a" style="left:1151px;top:350px" width="11" height="7"><path d="M1 1l4.5 4.5 4.5-4.5" fill="none" stroke="#666" stroke-width="1"/></svg>
<!-- buttons -->
<div class="a" style="left:773px;top:743px;width:73px;height:21px;border:1px solid #0067c0;border-radius:4px;background:#fdfdfd"></div>
<div class="a" style="left:800.30px;top:747.00px;font-size:12.0px;line-height:14px;transform:scaleX(0.9170);transform-origin:0.00px 0;">OK</div>
<div class="a" style="left:854px;top:743px;width:73px;height:21px;border:1px solid #d0d0d0;border-bottom-color:#b8b8b8;border-radius:4px;background:#fdfdfd"></div>
<div class="a" style="left:863.40px;top:747.00px;font-size:12.0px;line-height:14px;transform:scaleX(0.8692);transform-origin:0.00px 0;">Set Default</div>
<div class="a" style="left:1100px;top:743px;width:73px;height:21px;border:1px solid #d0d0d0;border-bottom-color:#b8b8b8;border-radius:4px;background:#fdfdfd"></div>
<div class="a" style="left:1118.20px;top:747.00px;font-size:12.0px;line-height:14px;transform:scaleX(0.8861);transform-origin:0.00px 0;">Cancel</div>
<!-- cursor -->
<svg class="a" style="left:949px;top:506px" width="13" height="21"><path d="M1 1v16l4-4 3 6.5 2.3-1-3-6.3h5.5z" fill="#fff" stroke="#000" stroke-width="1"/></svg>

</body></html>
